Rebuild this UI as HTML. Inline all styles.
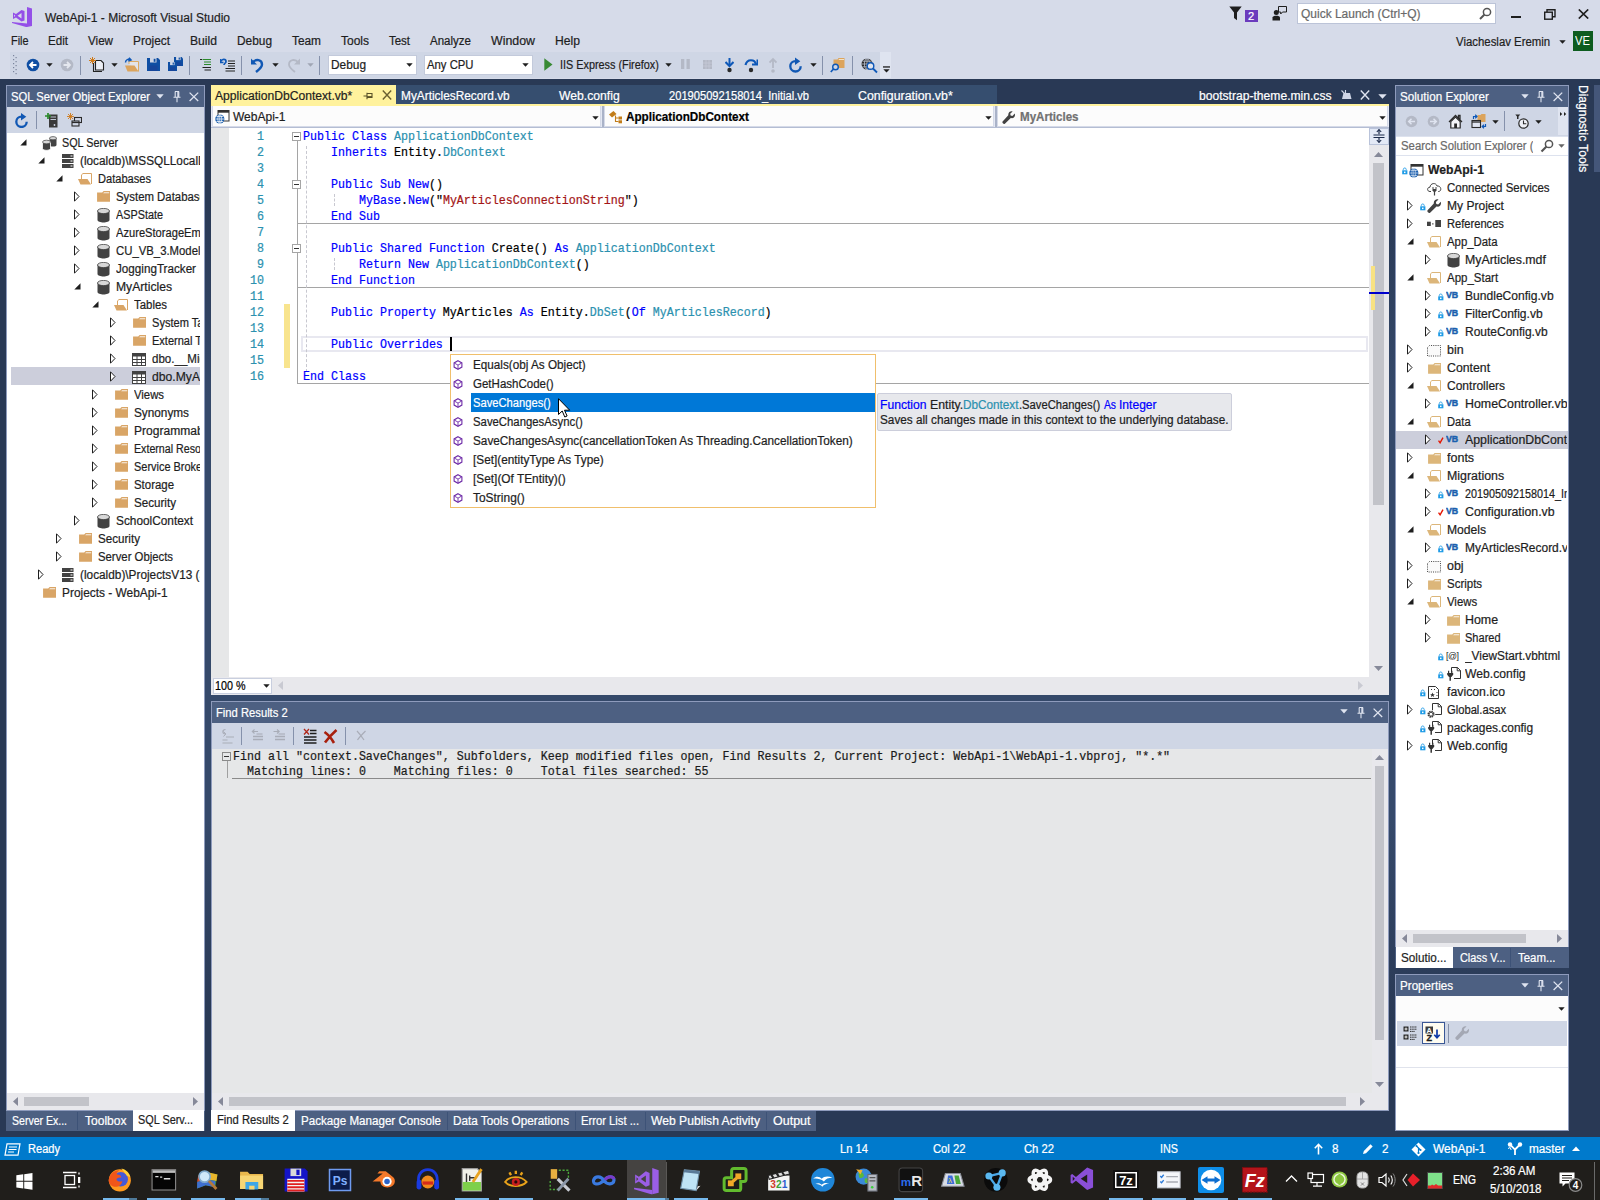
<!DOCTYPE html>
<html><head><meta charset="utf-8"><title>WebApi-1 - Microsoft Visual Studio</title>
<style>
html,body{margin:0;padding:0;}
body{width:1600px;height:1200px;overflow:hidden;position:relative;background:#293955;font-family:"Liberation Sans",sans-serif;font-size:12.5px;}
body div,body span.t,body svg{position:absolute;}
span.t{white-space:pre;transform-origin:0 50%;display:block;-webkit-text-stroke:0.22px currentColor;}
.m{font-family:"Liberation Mono",monospace;}
</style></head><body>
<div style="left:0px;top:0px;width:1600px;height:79px;background:#d6dbe9;"></div>
<div style="left:6px;top:79px;width:1563px;height:1058px;background:linear-gradient(to bottom,#293955 0,#293955 124px,#35496a 319px,#35496a 742px,#293955 940px,#293955 100%);"></div>
<div style="left:10px;top:52px;width:870px;height:26px;background:#cfd6e5;"></div>
<div style="left:880px;top:52px;width:11px;height:26px;background:#dfe4f0;"></div>
<span class="t" style="left:44.5px;top:10.37px;height:16px;line-height:16px;font-size:12.5px;color:#1e1e1e;transform:scaleX(0.9602);">WebApi-1 - Microsoft Visual Studio</span>
<span class="t" style="left:10.5px;top:33.37px;height:16px;line-height:16px;font-size:12.5px;color:#1e1e1e;transform:scaleX(0.8689);">File</span>
<span class="t" style="left:48px;top:33.37px;height:16px;line-height:16px;font-size:12.5px;color:#1e1e1e;transform:scaleX(0.9285);">Edit</span>
<span class="t" style="left:88px;top:33.37px;height:16px;line-height:16px;font-size:12.5px;color:#1e1e1e;transform:scaleX(0.9305);">View</span>
<span class="t" style="left:133px;top:33.37px;height:16px;line-height:16px;font-size:12.5px;color:#1e1e1e;transform:scaleX(0.9511);">Project</span>
<span class="t" style="left:190px;top:33.37px;height:16px;line-height:16px;font-size:12.5px;color:#1e1e1e;transform:scaleX(0.9714);">Build</span>
<span class="t" style="left:237px;top:33.37px;height:16px;line-height:16px;font-size:12.5px;color:#1e1e1e;transform:scaleX(0.9503);">Debug</span>
<span class="t" style="left:292px;top:33.37px;height:16px;line-height:16px;font-size:12.5px;color:#1e1e1e;transform:scaleX(0.9488);">Team</span>
<span class="t" style="left:341px;top:33.37px;height:16px;line-height:16px;font-size:12.5px;color:#1e1e1e;transform:scaleX(0.9596);">Tools</span>
<span class="t" style="left:389px;top:33.37px;height:16px;line-height:16px;font-size:12.5px;color:#1e1e1e;transform:scaleX(0.9161);">Test</span>
<span class="t" style="left:430px;top:33.37px;height:16px;line-height:16px;font-size:12.5px;color:#1e1e1e;transform:scaleX(0.9220);">Analyze</span>
<span class="t" style="left:491px;top:33.37px;height:16px;line-height:16px;font-size:12.5px;color:#1e1e1e;transform:scaleX(0.9897);">Window</span>
<span class="t" style="left:555px;top:33.37px;height:16px;line-height:16px;font-size:12.5px;color:#1e1e1e;transform:scaleX(0.9725);">Help</span>
<div style="left:1296.5px;top:2.5px;width:199.0px;height:21.0px;background:#fff;box-sizing:border-box;border:1px solid #bcc4d8;"></div>
<span class="t" style="left:1301px;top:5.57px;height:16px;line-height:16px;font-size:12.5px;color:#6a6a6a;transform:scaleX(0.9584);">Quick Launch (Ctrl+Q)</span>
<span class="t" style="left:1456.3px;top:33.67px;height:16px;line-height:16px;font-size:12.5px;color:#1e1e1e;transform:scaleX(0.9120);">Viacheslav Eremin</span>
<div style="left:1573px;top:31px;width:20px;height:20px;background:#0d5c1f;"></div>
<span class="t" style="left:1575.3px;top:33.10px;height:16px;line-height:16px;font-size:13px;color:#fff;transform:scaleX(0.8649);-webkit-text-stroke:0;">VE</span>
<div style="left:327.5px;top:55px;width:89.0px;height:20px;background:#fff;box-sizing:border-box;border:1px solid #c3cadb;"></div>
<span class="t" style="left:331px;top:57.37px;height:16px;line-height:16px;font-size:12.5px;color:#1e1e1e;transform:scaleX(0.9503);">Debug</span>
<div style="left:423.5px;top:55px;width:109.0px;height:20px;background:#fff;box-sizing:border-box;border:1px solid #c3cadb;"></div>
<span class="t" style="left:427px;top:57.37px;height:16px;line-height:16px;font-size:12.5px;color:#1e1e1e;transform:scaleX(0.9046);">Any CPU</span>
<span class="t" style="left:560px;top:57.37px;height:16px;line-height:16px;font-size:12.5px;color:#1e1e1e;transform:scaleX(0.8674);">IIS Express (Firefox)</span>
<div style="left:80.0px;top:55.5px;width:1.0px;height:19.0px;background:#8591ab;"></div>
<div style="left:189.0px;top:55.5px;width:1.0px;height:19.0px;background:#8591ab;"></div>
<div style="left:241.0px;top:55.5px;width:1.0px;height:19.0px;background:#8591ab;"></div>
<div style="left:319.0px;top:55.5px;width:1.0px;height:19.0px;background:#8591ab;"></div>
<div style="left:822.0px;top:55.5px;width:1.0px;height:19.0px;background:#8591ab;"></div>
<div style="left:852.0px;top:55.5px;width:1.0px;height:19.0px;background:#8591ab;"></div>
<div style="left:6px;top:85px;width:199px;height:1026px;background:#8e9bbc;"></div>
<div style="left:7px;top:86px;width:197px;height:1024px;background:#fff;"></div>
<div style="left:7px;top:86px;width:197px;height:21px;background:#4d6082;"></div>
<span class="t" style="left:11px;top:89.27px;height:16px;line-height:16px;font-size:12.5px;color:#fff;transform:scaleX(0.9000);">SQL Server Object Explorer</span>
<div style="left:7px;top:107px;width:197px;height:26px;background:#cfd6e5;"></div>
<div style="left:62px;top:134.97px;width:138px;height:16px;overflow:hidden;"><span class="t" style="left:0;top:0;height:16px;line-height:16px;font-size:12.5px;color:#1e1e1e;transform:scaleX(0.8637);">SQL Server</span></div>
<div style="left:80px;top:152.97px;width:120px;height:16px;overflow:hidden;"><span class="t" style="left:0;top:0;height:16px;line-height:16px;font-size:12.5px;color:#1e1e1e;transform:scaleX(0.9436);">(localdb)\MSSQLLocalDB (SQL</span></div>
<div style="left:98px;top:170.97px;width:102px;height:16px;overflow:hidden;"><span class="t" style="left:0;top:0;height:16px;line-height:16px;font-size:12.5px;color:#1e1e1e;transform:scaleX(0.8869);">Databases</span></div>
<div style="left:116px;top:188.97px;width:84px;height:16px;overflow:hidden;"><span class="t" style="left:0;top:0;height:16px;line-height:16px;font-size:12.5px;color:#1e1e1e;transform:scaleX(0.9106);">System Databases</span></div>
<div style="left:116px;top:206.97px;width:84px;height:16px;overflow:hidden;"><span class="t" style="left:0;top:0;height:16px;line-height:16px;font-size:12.5px;color:#1e1e1e;transform:scaleX(0.8672);">ASPState</span></div>
<div style="left:116px;top:224.97px;width:84px;height:16px;overflow:hidden;"><span class="t" style="left:0;top:0;height:16px;line-height:16px;font-size:12.5px;color:#1e1e1e;transform:scaleX(0.8907);">AzureStorageEmulatorDb</span></div>
<div style="left:116px;top:242.97px;width:84px;height:16px;overflow:hidden;"><span class="t" style="left:0;top:0;height:16px;line-height:16px;font-size:12.5px;color:#1e1e1e;transform:scaleX(0.9076);">CU_VB_3.Models</span></div>
<div style="left:116px;top:260.97px;width:84px;height:16px;overflow:hidden;"><span class="t" style="left:0;top:0;height:16px;line-height:16px;font-size:12.5px;color:#1e1e1e;transform:scaleX(0.9337);">JoggingTracker</span></div>
<div style="left:116px;top:278.97px;width:84px;height:16px;overflow:hidden;"><span class="t" style="left:0;top:0;height:16px;line-height:16px;font-size:12.5px;color:#1e1e1e;transform:scaleX(0.9715);">MyArticles</span></div>
<div style="left:134px;top:296.97px;width:66px;height:16px;overflow:hidden;"><span class="t" style="left:0;top:0;height:16px;line-height:16px;font-size:12.5px;color:#1e1e1e;transform:scaleX(0.9133);">Tables</span></div>
<div style="left:152px;top:314.97px;width:48px;height:16px;overflow:hidden;"><span class="t" style="left:0;top:0;height:16px;line-height:16px;font-size:12.5px;color:#1e1e1e;transform:scaleX(0.8848);">System Tables</span></div>
<div style="left:152px;top:332.97px;width:48px;height:16px;overflow:hidden;"><span class="t" style="left:0;top:0;height:16px;line-height:16px;font-size:12.5px;color:#1e1e1e;transform:scaleX(0.8819);">External Tables</span></div>
<div style="left:152px;top:350.97px;width:48px;height:16px;overflow:hidden;"><span class="t" style="left:0;top:0;height:16px;line-height:16px;font-size:12.5px;color:#1e1e1e;transform:scaleX(0.9238);">dbo.__MigrationHistory</span></div>
<div style="left:11px;top:367.0px;width:189px;height:18.0px;background:#cccedb;"></div>
<div style="left:152px;top:368.97px;width:48px;height:16px;overflow:hidden;"><span class="t" style="left:0;top:0;height:16px;line-height:16px;font-size:12.5px;color:#1e1e1e;transform:scaleX(0.9731);">dbo.MyArticlesRecords</span></div>
<div style="left:134px;top:386.97px;width:66px;height:16px;overflow:hidden;"><span class="t" style="left:0;top:0;height:16px;line-height:16px;font-size:12.5px;color:#1e1e1e;transform:scaleX(0.9059);">Views</span></div>
<div style="left:134px;top:404.97px;width:66px;height:16px;overflow:hidden;"><span class="t" style="left:0;top:0;height:16px;line-height:16px;font-size:12.5px;color:#1e1e1e;transform:scaleX(0.9425);">Synonyms</span></div>
<div style="left:134px;top:422.97px;width:66px;height:16px;overflow:hidden;"><span class="t" style="left:0;top:0;height:16px;line-height:16px;font-size:12.5px;color:#1e1e1e;transform:scaleX(0.9649);">Programmability</span></div>
<div style="left:134px;top:440.97px;width:66px;height:16px;overflow:hidden;"><span class="t" style="left:0;top:0;height:16px;line-height:16px;font-size:12.5px;color:#1e1e1e;transform:scaleX(0.8525);">External Resources</span></div>
<div style="left:134px;top:458.97px;width:66px;height:16px;overflow:hidden;"><span class="t" style="left:0;top:0;height:16px;line-height:16px;font-size:12.5px;color:#1e1e1e;transform:scaleX(0.8750);">Service Broker</span></div>
<div style="left:134px;top:476.97px;width:66px;height:16px;overflow:hidden;"><span class="t" style="left:0;top:0;height:16px;line-height:16px;font-size:12.5px;color:#1e1e1e;transform:scaleX(0.9137);">Storage</span></div>
<div style="left:134px;top:494.97px;width:66px;height:16px;overflow:hidden;"><span class="t" style="left:0;top:0;height:16px;line-height:16px;font-size:12.5px;color:#1e1e1e;transform:scaleX(0.9302);">Security</span></div>
<div style="left:116px;top:512.97px;width:84px;height:16px;overflow:hidden;"><span class="t" style="left:0;top:0;height:16px;line-height:16px;font-size:12.5px;color:#1e1e1e;transform:scaleX(0.9472);">SchoolContext</span></div>
<div style="left:98px;top:530.97px;width:102px;height:16px;overflow:hidden;"><span class="t" style="left:0;top:0;height:16px;line-height:16px;font-size:12.5px;color:#1e1e1e;transform:scaleX(0.9302);">Security</span></div>
<div style="left:98px;top:548.97px;width:102px;height:16px;overflow:hidden;"><span class="t" style="left:0;top:0;height:16px;line-height:16px;font-size:12.5px;color:#1e1e1e;transform:scaleX(0.9073);">Server Objects</span></div>
<div style="left:80px;top:566.97px;width:120px;height:16px;overflow:hidden;"><span class="t" style="left:0;top:0;height:16px;line-height:16px;font-size:12.5px;color:#1e1e1e;transform:scaleX(0.9452);">(localdb)\ProjectsV13 (SQL</span></div>
<div style="left:62px;top:584.97px;width:138px;height:16px;overflow:hidden;"><span class="t" style="left:0;top:0;height:16px;line-height:16px;font-size:12.5px;color:#1e1e1e;transform:scaleX(0.9512);">Projects - WebApi-1</span></div>
<div style="left:7px;top:1092.5px;width:197px;height:17.5px;background:#e8e8ec;"></div>
<div style="left:24px;top:1097px;width:65px;height:9px;background:#c2c3c9;"></div>
<div style="left:6px;top:1111px;width:199px;height:20px;background:#4d6082;"></div>
<div style="left:77px;top:1112px;width:1px;height:18px;background:#3d5277;"></div>
<div style="left:132.5px;top:1110px;width:71.5px;height:21px;background:#fff;"></div>
<span class="t" style="left:12px;top:1113.37px;height:16px;line-height:16px;font-size:12.5px;color:#fff;transform:scaleX(0.8424);">Server Ex...</span>
<span class="t" style="left:84.5px;top:1113.37px;height:16px;line-height:16px;font-size:12.5px;color:#fff;transform:scaleX(0.9633);">Toolbox</span>
<span class="t" style="left:138px;top:1111.67px;height:16px;line-height:16px;font-size:12.5px;color:#1e1e1e;transform:scaleX(0.8701);">SQL Serv...</span>
<div style="left:1395px;top:85px;width:174px;height:863px;background:#8e9bbc;"></div>
<div style="left:1396px;top:86px;width:172px;height:861px;background:#fff;"></div>
<div style="left:1396px;top:86px;width:172px;height:21px;background:#4d6082;"></div>
<span class="t" style="left:1400px;top:89.27px;height:16px;line-height:16px;font-size:12.5px;color:#fff;transform:scaleX(0.9329);">Solution Explorer</span>
<div style="left:1396px;top:107px;width:172px;height:28px;background:#cfd6e5;"></div>
<div style="left:1396px;top:135px;width:172px;height:21px;background:#cfd6e5;"></div>
<div style="left:1396px;top:136px;width:172px;height:19.5px;background:#fff;box-sizing:border-box;border-top:1px solid #dde2ee;border-bottom:1px solid #dde2ee;"></div>
<div style="left:1401.3px;top:138.27px;width:131.6px;height:16px;overflow:hidden;"><span class="t" style="left:0;top:0;height:16px;line-height:16px;font-size:12.5px;color:#6a6a6a;transform:scaleX(0.9082);">Search Solution Explorer (</span></div>
<div style="left:1428.3px;top:162.47px;width:139.20000000000005px;height:16px;overflow:hidden;"><span class="t" style="left:0;top:0;height:16px;line-height:16px;font-size:12.5px;color:#1e1e1e;transform:scaleX(0.9755);font-weight:bold;">WebApi-1</span></div>
<div style="left:1446.9px;top:180.47px;width:120.59999999999991px;height:16px;overflow:hidden;"><span class="t" style="left:0;top:0;height:16px;line-height:16px;font-size:12.5px;color:#1e1e1e;transform:scaleX(0.9172);">Connected Services</span></div>
<div style="left:1446.9px;top:198.47px;width:120.59999999999991px;height:16px;overflow:hidden;"><span class="t" style="left:0;top:0;height:16px;line-height:16px;font-size:12.5px;color:#1e1e1e;transform:scaleX(0.9638);">My Project</span></div>
<div style="left:1446.9px;top:216.47px;width:120.59999999999991px;height:16px;overflow:hidden;"><span class="t" style="left:0;top:0;height:16px;line-height:16px;font-size:12.5px;color:#1e1e1e;transform:scaleX(0.8902);">References</span></div>
<div style="left:1446.9px;top:234.47px;width:120.59999999999991px;height:16px;overflow:hidden;"><span class="t" style="left:0;top:0;height:16px;line-height:16px;font-size:12.5px;color:#1e1e1e;transform:scaleX(0.9102);">App_Data</span></div>
<div style="left:1464.9px;top:252.47px;width:102.59999999999991px;height:16px;overflow:hidden;"><span class="t" style="left:0;top:0;height:16px;line-height:16px;font-size:12.5px;color:#1e1e1e;transform:scaleX(0.9872);">MyArticles.mdf</span></div>
<div style="left:1446.9px;top:270.47px;width:120.59999999999991px;height:16px;overflow:hidden;"><span class="t" style="left:0;top:0;height:16px;line-height:16px;font-size:12.5px;color:#1e1e1e;transform:scaleX(0.9193);">App_Start</span></div>
<div style="left:1464.9px;top:288.47px;width:102.59999999999991px;height:16px;overflow:hidden;"><span class="t" style="left:0;top:0;height:16px;line-height:16px;font-size:12.5px;color:#1e1e1e;transform:scaleX(0.9659);">BundleConfig.vb</span></div>
<div style="left:1464.9px;top:306.47px;width:102.59999999999991px;height:16px;overflow:hidden;"><span class="t" style="left:0;top:0;height:16px;line-height:16px;font-size:12.5px;color:#1e1e1e;transform:scaleX(0.9630);">FilterConfig.vb</span></div>
<div style="left:1464.9px;top:324.47px;width:102.59999999999991px;height:16px;overflow:hidden;"><span class="t" style="left:0;top:0;height:16px;line-height:16px;font-size:12.5px;color:#1e1e1e;transform:scaleX(0.9587);">RouteConfig.vb</span></div>
<div style="left:1446.9px;top:342.47px;width:120.59999999999991px;height:16px;overflow:hidden;"><span class="t" style="left:0;top:0;height:16px;line-height:16px;font-size:12.5px;color:#1e1e1e;transform:scaleX(0.9952);">bin</span></div>
<div style="left:1446.9px;top:360.47px;width:120.59999999999991px;height:16px;overflow:hidden;"><span class="t" style="left:0;top:0;height:16px;line-height:16px;font-size:12.5px;color:#1e1e1e;transform:scaleX(0.9845);">Content</span></div>
<div style="left:1446.9px;top:378.47px;width:120.59999999999991px;height:16px;overflow:hidden;"><span class="t" style="left:0;top:0;height:16px;line-height:16px;font-size:12.5px;color:#1e1e1e;transform:scaleX(0.9614);">Controllers</span></div>
<div style="left:1464.9px;top:396.47px;width:102.59999999999991px;height:16px;overflow:hidden;"><span class="t" style="left:0;top:0;height:16px;line-height:16px;font-size:12.5px;color:#1e1e1e;transform:scaleX(0.9912);">HomeController.vb</span></div>
<div style="left:1446.9px;top:414.47px;width:120.59999999999991px;height:16px;overflow:hidden;"><span class="t" style="left:0;top:0;height:16px;line-height:16px;font-size:12.5px;color:#1e1e1e;transform:scaleX(0.8939);">Data</span></div>
<div style="left:1396px;top:431px;width:172px;height:18px;background:#cccedb;"></div>
<div style="left:1464.9px;top:432.47px;width:102.59999999999991px;height:16px;overflow:hidden;"><span class="t" style="left:0;top:0;height:16px;line-height:16px;font-size:12.5px;color:#1e1e1e;transform:scaleX(0.9862);">ApplicationDbContext.vb</span></div>
<div style="left:1446.9px;top:450.47px;width:120.59999999999991px;height:16px;overflow:hidden;"><span class="t" style="left:0;top:0;height:16px;line-height:16px;font-size:12.5px;color:#1e1e1e;transform:scaleX(1.0001);">fonts</span></div>
<div style="left:1446.9px;top:468.47px;width:120.59999999999991px;height:16px;overflow:hidden;"><span class="t" style="left:0;top:0;height:16px;line-height:16px;font-size:12.5px;color:#1e1e1e;transform:scaleX(0.9904);">Migrations</span></div>
<div style="left:1464.9px;top:486.47px;width:102.59999999999991px;height:16px;overflow:hidden;"><span class="t" style="left:0;top:0;height:16px;line-height:16px;font-size:12.5px;color:#1e1e1e;transform:scaleX(0.8641);">201905092158014_Initial.vb</span></div>
<div style="left:1464.9px;top:504.47px;width:102.59999999999991px;height:16px;overflow:hidden;"><span class="t" style="left:0;top:0;height:16px;line-height:16px;font-size:12.5px;color:#1e1e1e;transform:scaleX(0.9844);">Configuration.vb</span></div>
<div style="left:1446.9px;top:522.47px;width:120.59999999999991px;height:16px;overflow:hidden;"><span class="t" style="left:0;top:0;height:16px;line-height:16px;font-size:12.5px;color:#1e1e1e;transform:scaleX(0.9704);">Models</span></div>
<div style="left:1464.9px;top:540.47px;width:102.59999999999991px;height:16px;overflow:hidden;"><span class="t" style="left:0;top:0;height:16px;line-height:16px;font-size:12.5px;color:#1e1e1e;transform:scaleX(0.9575);">MyArticlesRecord.vb</span></div>
<div style="left:1446.9px;top:558.47px;width:120.59999999999991px;height:16px;overflow:hidden;"><span class="t" style="left:0;top:0;height:16px;line-height:16px;font-size:12.5px;color:#1e1e1e;transform:scaleX(0.9952);">obj</span></div>
<div style="left:1446.9px;top:576.47px;width:120.59999999999991px;height:16px;overflow:hidden;"><span class="t" style="left:0;top:0;height:16px;line-height:16px;font-size:12.5px;color:#1e1e1e;transform:scaleX(0.9188);">Scripts</span></div>
<div style="left:1446.9px;top:594.47px;width:120.59999999999991px;height:16px;overflow:hidden;"><span class="t" style="left:0;top:0;height:16px;line-height:16px;font-size:12.5px;color:#1e1e1e;transform:scaleX(0.9089);">Views</span></div>
<div style="left:1464.9px;top:612.47px;width:102.59999999999991px;height:16px;overflow:hidden;"><span class="t" style="left:0;top:0;height:16px;line-height:16px;font-size:12.5px;color:#1e1e1e;transform:scaleX(0.9927);">Home</span></div>
<div style="left:1464.9px;top:630.47px;width:102.59999999999991px;height:16px;overflow:hidden;"><span class="t" style="left:0;top:0;height:16px;line-height:16px;font-size:12.5px;color:#1e1e1e;transform:scaleX(0.8833);">Shared</span></div>
<div style="left:1464.9px;top:648.47px;width:102.59999999999991px;height:16px;overflow:hidden;"><span class="t" style="left:0;top:0;height:16px;line-height:16px;font-size:12.5px;color:#1e1e1e;transform:scaleX(0.9463);">_ViewStart.vbhtml</span></div>
<div style="left:1464.9px;top:666.47px;width:102.59999999999991px;height:16px;overflow:hidden;"><span class="t" style="left:0;top:0;height:16px;line-height:16px;font-size:12.5px;color:#1e1e1e;transform:scaleX(0.9727);">Web.config</span></div>
<div style="left:1446.9px;top:684.47px;width:120.59999999999991px;height:16px;overflow:hidden;"><span class="t" style="left:0;top:0;height:16px;line-height:16px;font-size:12.5px;color:#1e1e1e;transform:scaleX(0.9838);">favicon.ico</span></div>
<div style="left:1446.9px;top:702.47px;width:120.59999999999991px;height:16px;overflow:hidden;"><span class="t" style="left:0;top:0;height:16px;line-height:16px;font-size:12.5px;color:#1e1e1e;transform:scaleX(0.8954);">Global.asax</span></div>
<div style="left:1446.9px;top:720.47px;width:120.59999999999991px;height:16px;overflow:hidden;"><span class="t" style="left:0;top:0;height:16px;line-height:16px;font-size:12.5px;color:#1e1e1e;transform:scaleX(0.9532);">packages.config</span></div>
<div style="left:1446.9px;top:738.47px;width:120.59999999999991px;height:16px;overflow:hidden;"><span class="t" style="left:0;top:0;height:16px;line-height:16px;font-size:12.5px;color:#1e1e1e;transform:scaleX(0.9727);">Web.config</span></div>
<div style="left:1396px;top:930px;width:172px;height:17px;background:#e8e8ec;"></div>
<div style="left:1412.5px;top:934px;width:113.5px;height:9px;background:#c2c3c9;"></div>
<div style="left:1395px;top:947px;width:174px;height:21px;background:#4d6082;"></div>
<div style="left:1396px;top:947px;width:56.5px;height:21px;background:#fff;"></div>
<div style="left:1510px;top:948px;width:1px;height:19px;background:#3d5277;"></div>
<span class="t" style="left:1401px;top:949.57px;height:16px;line-height:16px;font-size:12.5px;color:#1e1e1e;transform:scaleX(0.9355);">Solutio...</span>
<span class="t" style="left:1459.5px;top:950.07px;height:16px;line-height:16px;font-size:12.5px;color:#fff;transform:scaleX(0.8694);">Class V...</span>
<span class="t" style="left:1517.5px;top:950.07px;height:16px;line-height:16px;font-size:12.5px;color:#fff;transform:scaleX(0.9150);">Team...</span>
<div style="left:1395px;top:974px;width:174px;height:157px;background:#8e9bbc;"></div>
<div style="left:1396px;top:975px;width:172px;height:155px;background:#fff;"></div>
<div style="left:1396px;top:975px;width:172px;height:21px;background:#4d6082;"></div>
<span class="t" style="left:1400px;top:978.27px;height:16px;line-height:16px;font-size:12.5px;color:#fff;transform:scaleX(0.9304);">Properties</span>
<div style="left:1396px;top:996px;width:172px;height:25px;background:#fcfcfc;"></div>
<div style="left:1397px;top:1021px;width:170px;height:25px;background:#cfd6e5;"></div>
<div style="left:1396px;top:1066.5px;width:172px;height:1.0px;background:#e0e3ec;"></div>
<div style="left:1422px;top:1022px;width:23px;height:22px;background:#fffcf0;box-sizing:border-box;border:1px solid #3a5795;"></div>
<div style="left:1448px;top:1024px;width:1px;height:19px;background:#8591ab;"></div>
<div style="left:1594px;top:85px;width:6px;height:87px;background:#445679;"></div>
<span class="t" style="left:1575.5px;top:84px;height:16px;line-height:16px;font-size:12.5px;color:#fff;transform-origin:0 0;transform:translate(15px,1px) rotate(90deg) scaleX(0.962);">Diagnostic Tools</span>
<div style="left:211px;top:85px;width:185px;height:19px;background:#fff29d;"></div>
<div style="left:396px;top:85px;width:601px;height:19px;background:#364e6f;"></div>
<div style="left:211px;top:104px;width:1177.6px;height:2px;background:#fff29d;"></div>
<span class="t" style="left:215.4px;top:87.87px;height:16px;line-height:16px;font-size:12.5px;color:#1e1e1e;transform:scaleX(0.9687);">ApplicationDbContext.vb*</span>
<span class="t" style="left:401.3px;top:87.87px;height:16px;line-height:16px;font-size:12.5px;color:#fff;transform:scaleX(0.9485);">MyArticlesRecord.vb</span>
<span class="t" style="left:559.3px;top:87.87px;height:16px;line-height:16px;font-size:12.5px;color:#fff;transform:scaleX(0.9743);">Web.config</span>
<span class="t" style="left:668.8px;top:87.87px;height:16px;line-height:16px;font-size:12.5px;color:#fff;transform:scaleX(0.8913);">201905092158014_Initial.vb</span>
<span class="t" style="left:858.3px;top:87.87px;height:16px;line-height:16px;font-size:12.5px;color:#fff;transform:scaleX(0.9876);">Configuration.vb*</span>
<span class="t" style="left:1198.5px;top:87.87px;height:16px;line-height:16px;font-size:12.5px;color:#fff;transform:scaleX(0.9682);">bootstrap-theme.min.css</span>
<div style="left:211px;top:106px;width:1177.6px;height:22px;background:#e4e8f3;"></div>
<div style="left:211px;top:126.5px;width:1177.6px;height:1.5px;background:#b4bdd3;"></div>
<div style="left:212px;top:106px;width:389px;height:20.5px;background:#fcfcfc;box-sizing:border-box;border:1px solid #d5dae8;border-top:0;"></div>
<div style="left:604px;top:106px;width:390px;height:20.5px;background:#fcfcfc;box-sizing:border-box;border:1px solid #d5dae8;border-top:0;"></div>
<div style="left:997px;top:106px;width:391px;height:20.5px;background:#fcfcfc;box-sizing:border-box;border:1px solid #d5dae8;border-top:0;"></div>
<div style="left:601.5px;top:106px;width:2.5px;height:21px;background:#a9b2c8;"></div>
<div style="left:994.5px;top:106px;width:2.5px;height:21px;background:#a9b2c8;"></div>
<span class="t" style="left:233px;top:109.37px;height:16px;line-height:16px;font-size:12.5px;color:#1e1e1e;transform:scaleX(0.9606);">WebApi-1</span>
<span class="t" style="left:626px;top:109.37px;height:16px;line-height:16px;font-size:12.5px;color:#000;transform:scaleX(0.9373);font-weight:bold;">ApplicationDbContext</span>
<span class="t" style="left:1019.5px;top:109.37px;height:16px;line-height:16px;font-size:12.5px;color:#717171;transform:scaleX(0.9254);font-weight:bold;">MyArticles</span>
<div style="left:211px;top:128px;width:1177.6px;height:566.5px;background:#fff;"></div>
<div style="left:211px;top:128px;width:18px;height:549px;background:#e6e7e8;"></div>
<div style="left:211px;top:677px;width:1158.2px;height:17.5px;background:#e8e8ec;"></div>
<div style="left:1369.2px;top:677px;width:19.4px;height:17.5px;background:#e8e8ec;"></div>
<div style="left:212.5px;top:678px;width:59.0px;height:15.5px;background:#fff;box-sizing:border-box;border:1px solid #c9cfdf;"></div>
<span class="t" style="left:214.8px;top:678.27px;height:16px;line-height:16px;font-size:12.5px;color:#000;transform:scaleX(0.8606);">100 %</span>
<div style="left:1369.2px;top:128px;width:19.4px;height:549px;background:#e8e8ec;"></div>
<div style="left:1369.2px;top:128px;width:19.4px;height:17px;background:#e3e9f6;box-sizing:border-box;border:1px solid #b9c3da;"></div>
<div style="left:1373px;top:162.5px;width:11.3px;height:342.0px;background:#c2c3c9;"></div>
<div style="left:1370.5px;top:266px;width:4.5px;height:43.5px;background:#f8e282;"></div>
<div style="left:1369px;top:292px;width:19.5px;height:2px;background:#0000cd;"></div>
<div style="left:284px;top:304px;width:5.6px;height:64px;background:#f8e48e;"></div>
<div style="left:297.5px;top:223px;width:1071.7px;height:1px;background:#a5a5a5;"></div>
<div style="left:297.5px;top:287px;width:1071.7px;height:1px;background:#a5a5a5;"></div>
<div style="left:297.5px;top:382.6px;width:1071.7px;height:1.0px;background:#a5a5a5;"></div>
<div style="left:297px;top:141px;width:1px;height:242.6px;background:#a5a5a5;"></div>
<div style="left:300.5px;top:336px;width:1067.5px;height:16px;background:#fff;box-sizing:border-box;border:2px solid #e8e8f0;"></div>
<div style="left:306px;top:146px;width:0;height:226px;border-left:1px dashed #c8c8d0;"></div>
<div style="left:334px;top:194px;width:0;height:12px;border-left:1px dashed #c8c8d0;"></div>
<div style="left:334px;top:258px;width:0;height:12px;border-left:1px dashed #c8c8d0;"></div>
<div style="left:292px;top:132px;width:9px;height:9px;background:#fff;box-sizing:border-box;border:1px solid #a5a5a5;"></div>
<div style="left:294px;top:136px;width:5px;height:1px;background:#333;"></div>
<div style="left:292px;top:180px;width:9px;height:9px;background:#fff;box-sizing:border-box;border:1px solid #a5a5a5;"></div>
<div style="left:294px;top:184px;width:5px;height:1px;background:#333;"></div>
<div style="left:292px;top:244px;width:9px;height:9px;background:#fff;box-sizing:border-box;border:1px solid #a5a5a5;"></div>
<div style="left:294px;top:248px;width:5px;height:1px;background:#333;"></div>
<span class="t m" style="left:257px;top:129.48px;height:16px;line-height:16px;font-size:13.2px;transform:scaleX(0.8837);"><span style="color:#2b91af">1</span></span>
<span class="t m" style="left:303.3px;top:129.48px;height:16px;line-height:16px;font-size:13.2px;transform:scaleX(0.8837);"><span style="color:#0000ff">Public Class </span><span style="color:#2b91af">ApplicationDbContext</span></span>
<span class="t m" style="left:257px;top:145.48px;height:16px;line-height:16px;font-size:13.2px;transform:scaleX(0.8837);"><span style="color:#2b91af">2</span></span>
<span class="t m" style="left:303.3px;top:145.48px;height:16px;line-height:16px;font-size:13.2px;transform:scaleX(0.8837);"><span style="color:#0000ff">    Inherits </span><span style="color:#000">Entity.</span><span style="color:#2b91af">DbContext</span></span>
<span class="t m" style="left:257px;top:161.48px;height:16px;line-height:16px;font-size:13.2px;transform:scaleX(0.8837);"><span style="color:#2b91af">3</span></span>
<span class="t m" style="left:257px;top:177.48px;height:16px;line-height:16px;font-size:13.2px;transform:scaleX(0.8837);"><span style="color:#2b91af">4</span></span>
<span class="t m" style="left:303.3px;top:177.48px;height:16px;line-height:16px;font-size:13.2px;transform:scaleX(0.8837);"><span style="color:#0000ff">    Public Sub New</span><span style="color:#000">()</span></span>
<span class="t m" style="left:257px;top:193.48px;height:16px;line-height:16px;font-size:13.2px;transform:scaleX(0.8837);"><span style="color:#2b91af">5</span></span>
<span class="t m" style="left:303.3px;top:193.48px;height:16px;line-height:16px;font-size:13.2px;transform:scaleX(0.8837);"><span style="color:#0000ff">        MyBase</span><span style="color:#000">.</span><span style="color:#0000ff">New</span><span style="color:#000">("</span><span style="color:#a31515">MyArticlesConnectionString</span><span style="color:#000">")</span></span>
<span class="t m" style="left:257px;top:209.48px;height:16px;line-height:16px;font-size:13.2px;transform:scaleX(0.8837);"><span style="color:#2b91af">6</span></span>
<span class="t m" style="left:303.3px;top:209.48px;height:16px;line-height:16px;font-size:13.2px;transform:scaleX(0.8837);"><span style="color:#0000ff">    End Sub</span></span>
<span class="t m" style="left:257px;top:225.48px;height:16px;line-height:16px;font-size:13.2px;transform:scaleX(0.8837);"><span style="color:#2b91af">7</span></span>
<span class="t m" style="left:257px;top:241.48px;height:16px;line-height:16px;font-size:13.2px;transform:scaleX(0.8837);"><span style="color:#2b91af">8</span></span>
<span class="t m" style="left:303.3px;top:241.48px;height:16px;line-height:16px;font-size:13.2px;transform:scaleX(0.8837);"><span style="color:#0000ff">    Public Shared Function </span><span style="color:#000">Create() </span><span style="color:#0000ff">As </span><span style="color:#2b91af">ApplicationDbContext</span></span>
<span class="t m" style="left:257px;top:257.48px;height:16px;line-height:16px;font-size:13.2px;transform:scaleX(0.8837);"><span style="color:#2b91af">9</span></span>
<span class="t m" style="left:303.3px;top:257.48px;height:16px;line-height:16px;font-size:13.2px;transform:scaleX(0.8837);"><span style="color:#0000ff">        Return New </span><span style="color:#2b91af">ApplicationDbContext</span><span style="color:#000">()</span></span>
<span class="t m" style="left:250px;top:273.48px;height:16px;line-height:16px;font-size:13.2px;transform:scaleX(0.8837);"><span style="color:#2b91af">10</span></span>
<span class="t m" style="left:303.3px;top:273.48px;height:16px;line-height:16px;font-size:13.2px;transform:scaleX(0.8837);"><span style="color:#0000ff">    End Function</span></span>
<span class="t m" style="left:250px;top:289.48px;height:16px;line-height:16px;font-size:13.2px;transform:scaleX(0.8837);"><span style="color:#2b91af">11</span></span>
<span class="t m" style="left:250px;top:305.48px;height:16px;line-height:16px;font-size:13.2px;transform:scaleX(0.8837);"><span style="color:#2b91af">12</span></span>
<span class="t m" style="left:303.3px;top:305.48px;height:16px;line-height:16px;font-size:13.2px;transform:scaleX(0.8837);"><span style="color:#0000ff">    Public Property </span><span style="color:#000">MyArticles </span><span style="color:#0000ff">As </span><span style="color:#000">Entity.</span><span style="color:#2b91af">DbSet</span><span style="color:#000">(</span><span style="color:#0000ff">Of </span><span style="color:#2b91af">MyArticlesRecord</span><span style="color:#000">)</span></span>
<span class="t m" style="left:250px;top:321.48px;height:16px;line-height:16px;font-size:13.2px;transform:scaleX(0.8837);"><span style="color:#2b91af">13</span></span>
<span class="t m" style="left:250px;top:337.48px;height:16px;line-height:16px;font-size:13.2px;transform:scaleX(0.8837);"><span style="color:#2b91af">14</span></span>
<span class="t m" style="left:303.3px;top:337.48px;height:16px;line-height:16px;font-size:13.2px;transform:scaleX(0.8837);"><span style="color:#0000ff">    Public Overrides </span></span>
<span class="t m" style="left:250px;top:353.48px;height:16px;line-height:16px;font-size:13.2px;transform:scaleX(0.8837);"><span style="color:#2b91af">15</span></span>
<span class="t m" style="left:250px;top:369.48px;height:16px;line-height:16px;font-size:13.2px;transform:scaleX(0.8837);"><span style="color:#2b91af">16</span></span>
<span class="t m" style="left:303.3px;top:369.48px;height:16px;line-height:16px;font-size:13.2px;transform:scaleX(0.8837);"><span style="color:#0000ff">End Class</span></span>
<div style="left:450.4px;top:336.5px;width:1.2px;height:14.5px;background:#000;"></div>
<div style="left:450px;top:354px;width:426px;height:154px;background:#fff;box-sizing:border-box;border:1px solid #f0bf6c;"></div>
<span class="t" style="left:473.3px;top:357.07px;height:16px;line-height:16px;font-size:12.5px;color:#1e1e1e;transform:scaleX(0.9377);">Equals(obj As Object)</span>
<span class="t" style="left:473.3px;top:376.07px;height:16px;line-height:16px;font-size:12.5px;color:#1e1e1e;transform:scaleX(0.9220);">GetHashCode()</span>
<div style="left:471px;top:393px;width:404px;height:19px;background:#0078d7;"></div>
<span class="t" style="left:473.3px;top:395.07px;height:16px;line-height:16px;font-size:12.5px;color:#fff;transform:scaleX(0.8947);">SaveChanges()</span>
<span class="t" style="left:473.3px;top:414.07px;height:16px;line-height:16px;font-size:12.5px;color:#1e1e1e;transform:scaleX(0.9075);">SaveChangesAsync()</span>
<span class="t" style="left:473.3px;top:433.07px;height:16px;line-height:16px;font-size:12.5px;color:#1e1e1e;transform:scaleX(0.9427);">SaveChangesAsync(cancellationToken As Threading.CancellationToken)</span>
<span class="t" style="left:473.3px;top:452.07px;height:16px;line-height:16px;font-size:12.5px;color:#1e1e1e;transform:scaleX(0.9422);">[Set](entityType As Type)</span>
<span class="t" style="left:473.3px;top:471.07px;height:16px;line-height:16px;font-size:12.5px;color:#1e1e1e;transform:scaleX(0.9489);">[Set](Of TEntity)()</span>
<span class="t" style="left:473.3px;top:490.07px;height:16px;line-height:16px;font-size:12.5px;color:#1e1e1e;transform:scaleX(0.9543);">ToString()</span>
<div style="left:876.5px;top:393px;width:355.0px;height:38px;background:#e7e8ec;box-sizing:border-box;border:1px solid #cccedb;border-radius:2px;"></div>
<span class="t" style="left:880px;top:397.37px;height:16px;line-height:16px;font-size:12.5px;color:#0000ff;transform:scaleX(0.9700);">Function</span>
<span class="t" style="left:930px;top:397.37px;height:16px;line-height:16px;font-size:12.5px;color:#1e1e1e;transform:scaleX(0.9821);">Entity.</span>
<span class="t" style="left:962.8px;top:397.37px;height:16px;line-height:16px;font-size:12.5px;color:#2b91af;transform:scaleX(0.9398);">DbContext</span>
<span class="t" style="left:1018.6px;top:397.37px;height:16px;line-height:16px;font-size:12.5px;color:#1e1e1e;transform:scaleX(0.8990);">.SaveChanges()</span>
<span class="t" style="left:1103.5px;top:397.37px;height:16px;line-height:16px;font-size:12.5px;color:#0000ff;transform:scaleX(0.8226);">As</span>
<span class="t" style="left:1119px;top:397.37px;height:16px;line-height:16px;font-size:12.5px;color:#0000ff;transform:scaleX(0.9663);">Integer</span>
<span class="t" style="left:880px;top:412.37px;height:16px;line-height:16px;font-size:12.5px;color:#1e1e1e;transform:scaleX(0.9410);">Saves all changes made in this context to the underlying database.</span>
<div style="left:211px;top:701px;width:1178px;height:410px;background:#8e9bbc;"></div>
<div style="left:212px;top:702px;width:1176px;height:408px;background:#e6e7e8;"></div>
<div style="left:212px;top:702px;width:1176px;height:20.5px;background:#4d6082;"></div>
<span class="t" style="left:216.3px;top:705.27px;height:16px;line-height:16px;font-size:12.5px;color:#fff;transform:scaleX(0.8975);">Find Results 2</span>
<div style="left:212px;top:722.5px;width:1176px;height:26.5px;background:#cfd6e5;"></div>
<div style="left:241.0px;top:727px;width:1.0px;height:18px;background:#8591ab;"></div>
<div style="left:293.0px;top:727px;width:1.0px;height:18px;background:#8591ab;"></div>
<div style="left:345.0px;top:727px;width:1.0px;height:18px;background:#8591ab;"></div>
<span class="t m" style="left:233.3px;top:749.48px;height:15px;line-height:15px;font-size:13.2px;color:#1a1a1a;transform:scaleX(0.8837);">Find all "context.SaveChanges", Subfolders, Keep modified files open, Find Results 2, Current Project: WebApi-1\WebApi-1.vbproj, "*.*"</span>
<span class="t m" style="left:233.3px;top:763.98px;height:15px;line-height:15px;font-size:13.2px;color:#1a1a1a;transform:scaleX(0.8837);">  Matching lines: 0    Matching files: 0    Total files searched: 55</span>
<div style="left:222px;top:752px;width:9px;height:9px;background:#e6e7e8;box-sizing:border-box;border:1px solid #8a8a8a;"></div>
<div style="left:224px;top:756px;width:5px;height:1px;background:#333;"></div>
<div style="left:227px;top:761px;width:1px;height:17px;background:#a0a0a0;"></div>
<div style="left:232px;top:777.5px;width:1139px;height:1.0px;background:#8a8a8a;"></div>
<div style="left:1371.5px;top:749px;width:16.5px;height:343.5px;background:#e8e8ec;"></div>
<div style="left:1375px;top:766px;width:9px;height:274px;background:#c2c3c9;"></div>
<div style="left:212px;top:1092.5px;width:1176px;height:17.5px;background:#e8e8ec;"></div>
<div style="left:228.5px;top:1097px;width:1117.5px;height:9px;background:#c2c3c9;"></div>
<div style="left:211px;top:1111px;width:605px;height:20px;background:#4d6082;"></div>
<div style="left:211px;top:1110px;width:83.5px;height:21px;background:#fff;"></div>
<span class="t" style="left:217px;top:1111.67px;height:16px;line-height:16px;font-size:12.5px;color:#1e1e1e;transform:scaleX(0.8987);">Find Results 2</span>
<span class="t" style="left:301px;top:1113.37px;height:16px;line-height:16px;font-size:12.5px;color:#fff;transform:scaleX(0.9285);">Package Manager Console</span>
<span class="t" style="left:453px;top:1113.37px;height:16px;line-height:16px;font-size:12.5px;color:#fff;transform:scaleX(0.9397);">Data Tools Operations</span>
<span class="t" style="left:581px;top:1113.37px;height:16px;line-height:16px;font-size:12.5px;color:#fff;transform:scaleX(0.8980);">Error List ...</span>
<span class="t" style="left:651px;top:1113.37px;height:16px;line-height:16px;font-size:12.5px;color:#fff;transform:scaleX(0.9705);">Web Publish Activity</span>
<span class="t" style="left:772.5px;top:1113.37px;height:16px;line-height:16px;font-size:12.5px;color:#fff;transform:scaleX(0.9994);">Output</span>
<div style="left:446.5px;top:1112px;width:1.0px;height:18px;background:#3d5277;"></div>
<div style="left:574.5px;top:1112px;width:1.0px;height:18px;background:#3d5277;"></div>
<div style="left:644.5px;top:1112px;width:1.0px;height:18px;background:#3d5277;"></div>
<div style="left:765.5px;top:1112px;width:1.0px;height:18px;background:#3d5277;"></div>
<div style="left:0px;top:1137px;width:1600px;height:23px;background:#007acc;"></div>
<span class="t" style="left:28px;top:1141.07px;height:16px;line-height:16px;font-size:12.5px;color:#fff;transform:scaleX(0.8857);">Ready</span>
<span class="t" style="left:840px;top:1141.07px;height:16px;line-height:16px;font-size:12.5px;color:#fff;transform:scaleX(0.8952);">Ln 14</span>
<span class="t" style="left:932.5px;top:1141.07px;height:16px;line-height:16px;font-size:12.5px;color:#fff;transform:scaleX(0.8995);">Col 22</span>
<span class="t" style="left:1024px;top:1141.07px;height:16px;line-height:16px;font-size:12.5px;color:#fff;transform:scaleX(0.8995);">Ch 22</span>
<span class="t" style="left:1160px;top:1141.07px;height:16px;line-height:16px;font-size:12.5px;color:#fff;transform:scaleX(0.8638);">INS</span>
<span class="t" style="left:1331.5px;top:1141.07px;height:16px;line-height:16px;font-size:12.5px;color:#fff;transform:scaleX(0.9351);">8</span>
<span class="t" style="left:1381.5px;top:1141.07px;height:16px;line-height:16px;font-size:12.5px;color:#fff;transform:scaleX(0.9351);">2</span>
<span class="t" style="left:1432.5px;top:1141.07px;height:16px;line-height:16px;font-size:12.5px;color:#fff;transform:scaleX(0.9606);">WebApi-1</span>
<span class="t" style="left:1529px;top:1141.07px;height:16px;line-height:16px;font-size:12.5px;color:#fff;transform:scaleX(0.9424);">master</span>
<svg style="left:19.7px;top:139.0px;" width="7" height="7" viewBox="0 0 7 7"><path d="M6.5 0.3V6.5H0.3Z" fill="#1e1e1e"/></svg>
<svg style="left:42px;top:135.5px;" width="15" height="15" viewBox="0 0 15 15"><path d="M7.5 2v7c0 2 7 2 7 0V2z" fill="#424242"/><ellipse cx="11" cy="2.2" rx="3.5" ry="1.6" fill="#d8d8d8" stroke="#424242" stroke-width="0.7"/><path d="M0.5 6v6.5c0 2.4 8 2.4 8 0V6z" fill="#424242" stroke="#fff" stroke-width="0.8"/><ellipse cx="4.5" cy="6" rx="4" ry="1.8" fill="#d8d8d8" stroke="#424242" stroke-width="0.7"/></svg>
<svg style="left:37.7px;top:157.0px;" width="7" height="7" viewBox="0 0 7 7"><path d="M6.5 0.3V6.5H0.3Z" fill="#1e1e1e"/></svg>
<svg style="left:61.5px;top:154.0px;" width="12" height="14" viewBox="0 0 12 14"><rect x="0" y="0" width="11.5" height="4" fill="#424242"/><rect x="8.5" y="1.5" width="2" height="1" fill="#fff"/><rect x="0" y="5" width="11.5" height="4" fill="#424242"/><rect x="8.5" y="6.5" width="2" height="1" fill="#fff"/><rect x="0" y="10" width="11.5" height="4" fill="#424242"/><rect x="8.5" y="11.5" width="2" height="1" fill="#fff"/></svg>
<svg style="left:55.7px;top:175.0px;" width="7" height="7" viewBox="0 0 7 7"><path d="M6.5 0.3V6.5H0.3Z" fill="#1e1e1e"/></svg>
<svg style="left:78px;top:173.0px;" width="15" height="12" viewBox="0 0 15 12"><path d="M3.5 6V1.8L5 0.5h8.5V11" fill="#fff" stroke="#d9a566" stroke-width="1"/><path d="M0 6h9.5l3.5 5.5H2.5z" fill="#d9a566"/></svg>
<svg style="left:73.7px;top:191.0px;" width="6" height="11" viewBox="0 0 6 11"><path d="M0.5 0.8L5 5.5L0.5 10.2Z" fill="#fff" stroke="#1e1e1e" stroke-width="1"/></svg>
<svg style="left:96.9px;top:191.4px;" width="13.2" height="11.2" viewBox="0 0 14 12"><path d="M0 1.5h5.5l1.5-1.5H14V11.5H0z" fill="#d9a566"/><path d="M7.5 1.3h5.5v1.2H6.5z" fill="#fff" opacity=".85"/></svg>
<svg style="left:73.7px;top:209.0px;" width="6" height="11" viewBox="0 0 6 11"><path d="M0.5 0.8L5 5.5L0.5 10.2Z" fill="#fff" stroke="#1e1e1e" stroke-width="1"/></svg>
<svg style="left:97px;top:207.5px;" width="13" height="15" viewBox="0 0 13 15"><path d="M0.5 3v9c0 3.3 12 3.3 12 0V3z" fill="#424242"/><ellipse cx="6.5" cy="3" rx="6" ry="2.6" fill="#d8d8d8" stroke="#424242" stroke-width="0.8"/></svg>
<svg style="left:73.7px;top:227.0px;" width="6" height="11" viewBox="0 0 6 11"><path d="M0.5 0.8L5 5.5L0.5 10.2Z" fill="#fff" stroke="#1e1e1e" stroke-width="1"/></svg>
<svg style="left:97px;top:225.5px;" width="13" height="15" viewBox="0 0 13 15"><path d="M0.5 3v9c0 3.3 12 3.3 12 0V3z" fill="#424242"/><ellipse cx="6.5" cy="3" rx="6" ry="2.6" fill="#d8d8d8" stroke="#424242" stroke-width="0.8"/></svg>
<svg style="left:73.7px;top:245.0px;" width="6" height="11" viewBox="0 0 6 11"><path d="M0.5 0.8L5 5.5L0.5 10.2Z" fill="#fff" stroke="#1e1e1e" stroke-width="1"/></svg>
<svg style="left:97px;top:243.5px;" width="13" height="15" viewBox="0 0 13 15"><path d="M0.5 3v9c0 3.3 12 3.3 12 0V3z" fill="#424242"/><ellipse cx="6.5" cy="3" rx="6" ry="2.6" fill="#d8d8d8" stroke="#424242" stroke-width="0.8"/></svg>
<svg style="left:73.7px;top:263.0px;" width="6" height="11" viewBox="0 0 6 11"><path d="M0.5 0.8L5 5.5L0.5 10.2Z" fill="#fff" stroke="#1e1e1e" stroke-width="1"/></svg>
<svg style="left:97px;top:261.5px;" width="13" height="15" viewBox="0 0 13 15"><path d="M0.5 3v9c0 3.3 12 3.3 12 0V3z" fill="#424242"/><ellipse cx="6.5" cy="3" rx="6" ry="2.6" fill="#d8d8d8" stroke="#424242" stroke-width="0.8"/></svg>
<svg style="left:73.7px;top:283.0px;" width="7" height="7" viewBox="0 0 7 7"><path d="M6.5 0.3V6.5H0.3Z" fill="#1e1e1e"/></svg>
<svg style="left:97px;top:279.5px;" width="13" height="15" viewBox="0 0 13 15"><path d="M0.5 3v9c0 3.3 12 3.3 12 0V3z" fill="#424242"/><ellipse cx="6.5" cy="3" rx="6" ry="2.6" fill="#d8d8d8" stroke="#424242" stroke-width="0.8"/></svg>
<svg style="left:91.7px;top:301.0px;" width="7" height="7" viewBox="0 0 7 7"><path d="M6.5 0.3V6.5H0.3Z" fill="#1e1e1e"/></svg>
<svg style="left:114px;top:299.0px;" width="15" height="12" viewBox="0 0 15 12"><path d="M3.5 6V1.8L5 0.5h8.5V11" fill="#fff" stroke="#d9a566" stroke-width="1"/><path d="M0 6h9.5l3.5 5.5H2.5z" fill="#d9a566"/></svg>
<svg style="left:109.7px;top:317.0px;" width="6" height="11" viewBox="0 0 6 11"><path d="M0.5 0.8L5 5.5L0.5 10.2Z" fill="#fff" stroke="#1e1e1e" stroke-width="1"/></svg>
<svg style="left:132.9px;top:317.4px;" width="13.2" height="11.2" viewBox="0 0 14 12"><path d="M0 1.5h5.5l1.5-1.5H14V11.5H0z" fill="#d9a566"/><path d="M7.5 1.3h5.5v1.2H6.5z" fill="#fff" opacity=".85"/></svg>
<svg style="left:109.7px;top:335.0px;" width="6" height="11" viewBox="0 0 6 11"><path d="M0.5 0.8L5 5.5L0.5 10.2Z" fill="#fff" stroke="#1e1e1e" stroke-width="1"/></svg>
<svg style="left:132.9px;top:335.4px;" width="13.2" height="11.2" viewBox="0 0 14 12"><path d="M0 1.5h5.5l1.5-1.5H14V11.5H0z" fill="#d9a566"/><path d="M7.5 1.3h5.5v1.2H6.5z" fill="#fff" opacity=".85"/></svg>
<svg style="left:109.7px;top:353.0px;" width="6" height="11" viewBox="0 0 6 11"><path d="M0.5 0.8L5 5.5L0.5 10.2Z" fill="#fff" stroke="#1e1e1e" stroke-width="1"/></svg>
<svg style="left:132px;top:352.5px;" width="14" height="13" viewBox="0 0 14 13"><rect x="0.5" y="0.5" width="13" height="12" fill="#fff" stroke="#424242"/><rect x="0.5" y="0.5" width="13" height="3" fill="#424242"/><path d="M0.5 6.5h13M0.5 9.5h13M5 3v10M9.5 3v10" stroke="#424242" stroke-width="1"/></svg>
<svg style="left:109.7px;top:371.0px;" width="6" height="11" viewBox="0 0 6 11"><path d="M0.5 0.8L5 5.5L0.5 10.2Z" fill="#fff" stroke="#1e1e1e" stroke-width="1"/></svg>
<svg style="left:132px;top:370.5px;" width="14" height="13" viewBox="0 0 14 13"><rect x="0.5" y="0.5" width="13" height="12" fill="#fff" stroke="#424242"/><rect x="0.5" y="0.5" width="13" height="3" fill="#424242"/><path d="M0.5 6.5h13M0.5 9.5h13M5 3v10M9.5 3v10" stroke="#424242" stroke-width="1"/></svg>
<svg style="left:91.7px;top:389.0px;" width="6" height="11" viewBox="0 0 6 11"><path d="M0.5 0.8L5 5.5L0.5 10.2Z" fill="#fff" stroke="#1e1e1e" stroke-width="1"/></svg>
<svg style="left:114.9px;top:389.4px;" width="13.2" height="11.2" viewBox="0 0 14 12"><path d="M0 1.5h5.5l1.5-1.5H14V11.5H0z" fill="#d9a566"/><path d="M7.5 1.3h5.5v1.2H6.5z" fill="#fff" opacity=".85"/></svg>
<svg style="left:91.7px;top:407.0px;" width="6" height="11" viewBox="0 0 6 11"><path d="M0.5 0.8L5 5.5L0.5 10.2Z" fill="#fff" stroke="#1e1e1e" stroke-width="1"/></svg>
<svg style="left:114.9px;top:407.4px;" width="13.2" height="11.2" viewBox="0 0 14 12"><path d="M0 1.5h5.5l1.5-1.5H14V11.5H0z" fill="#d9a566"/><path d="M7.5 1.3h5.5v1.2H6.5z" fill="#fff" opacity=".85"/></svg>
<svg style="left:91.7px;top:425.0px;" width="6" height="11" viewBox="0 0 6 11"><path d="M0.5 0.8L5 5.5L0.5 10.2Z" fill="#fff" stroke="#1e1e1e" stroke-width="1"/></svg>
<svg style="left:114.9px;top:425.4px;" width="13.2" height="11.2" viewBox="0 0 14 12"><path d="M0 1.5h5.5l1.5-1.5H14V11.5H0z" fill="#d9a566"/><path d="M7.5 1.3h5.5v1.2H6.5z" fill="#fff" opacity=".85"/></svg>
<svg style="left:91.7px;top:443.0px;" width="6" height="11" viewBox="0 0 6 11"><path d="M0.5 0.8L5 5.5L0.5 10.2Z" fill="#fff" stroke="#1e1e1e" stroke-width="1"/></svg>
<svg style="left:114.9px;top:443.4px;" width="13.2" height="11.2" viewBox="0 0 14 12"><path d="M0 1.5h5.5l1.5-1.5H14V11.5H0z" fill="#d9a566"/><path d="M7.5 1.3h5.5v1.2H6.5z" fill="#fff" opacity=".85"/></svg>
<svg style="left:91.7px;top:461.0px;" width="6" height="11" viewBox="0 0 6 11"><path d="M0.5 0.8L5 5.5L0.5 10.2Z" fill="#fff" stroke="#1e1e1e" stroke-width="1"/></svg>
<svg style="left:114.9px;top:461.4px;" width="13.2" height="11.2" viewBox="0 0 14 12"><path d="M0 1.5h5.5l1.5-1.5H14V11.5H0z" fill="#d9a566"/><path d="M7.5 1.3h5.5v1.2H6.5z" fill="#fff" opacity=".85"/></svg>
<svg style="left:91.7px;top:479.0px;" width="6" height="11" viewBox="0 0 6 11"><path d="M0.5 0.8L5 5.5L0.5 10.2Z" fill="#fff" stroke="#1e1e1e" stroke-width="1"/></svg>
<svg style="left:114.9px;top:479.4px;" width="13.2" height="11.2" viewBox="0 0 14 12"><path d="M0 1.5h5.5l1.5-1.5H14V11.5H0z" fill="#d9a566"/><path d="M7.5 1.3h5.5v1.2H6.5z" fill="#fff" opacity=".85"/></svg>
<svg style="left:91.7px;top:497.0px;" width="6" height="11" viewBox="0 0 6 11"><path d="M0.5 0.8L5 5.5L0.5 10.2Z" fill="#fff" stroke="#1e1e1e" stroke-width="1"/></svg>
<svg style="left:114.9px;top:497.4px;" width="13.2" height="11.2" viewBox="0 0 14 12"><path d="M0 1.5h5.5l1.5-1.5H14V11.5H0z" fill="#d9a566"/><path d="M7.5 1.3h5.5v1.2H6.5z" fill="#fff" opacity=".85"/></svg>
<svg style="left:73.7px;top:515.0px;" width="6" height="11" viewBox="0 0 6 11"><path d="M0.5 0.8L5 5.5L0.5 10.2Z" fill="#fff" stroke="#1e1e1e" stroke-width="1"/></svg>
<svg style="left:97px;top:513.5px;" width="13" height="15" viewBox="0 0 13 15"><path d="M0.5 3v9c0 3.3 12 3.3 12 0V3z" fill="#424242"/><ellipse cx="6.5" cy="3" rx="6" ry="2.6" fill="#d8d8d8" stroke="#424242" stroke-width="0.8"/></svg>
<svg style="left:55.7px;top:533.0px;" width="6" height="11" viewBox="0 0 6 11"><path d="M0.5 0.8L5 5.5L0.5 10.2Z" fill="#fff" stroke="#1e1e1e" stroke-width="1"/></svg>
<svg style="left:78.9px;top:533.4px;" width="13.2" height="11.2" viewBox="0 0 14 12"><path d="M0 1.5h5.5l1.5-1.5H14V11.5H0z" fill="#d9a566"/><path d="M7.5 1.3h5.5v1.2H6.5z" fill="#fff" opacity=".85"/></svg>
<svg style="left:55.7px;top:551.0px;" width="6" height="11" viewBox="0 0 6 11"><path d="M0.5 0.8L5 5.5L0.5 10.2Z" fill="#fff" stroke="#1e1e1e" stroke-width="1"/></svg>
<svg style="left:78.9px;top:551.4px;" width="13.2" height="11.2" viewBox="0 0 14 12"><path d="M0 1.5h5.5l1.5-1.5H14V11.5H0z" fill="#d9a566"/><path d="M7.5 1.3h5.5v1.2H6.5z" fill="#fff" opacity=".85"/></svg>
<svg style="left:37.7px;top:569.0px;" width="6" height="11" viewBox="0 0 6 11"><path d="M0.5 0.8L5 5.5L0.5 10.2Z" fill="#fff" stroke="#1e1e1e" stroke-width="1"/></svg>
<svg style="left:61.5px;top:568.0px;" width="12" height="14" viewBox="0 0 12 14"><rect x="0" y="0" width="11.5" height="4" fill="#424242"/><rect x="8.5" y="1.5" width="2" height="1" fill="#fff"/><rect x="0" y="5" width="11.5" height="4" fill="#424242"/><rect x="8.5" y="6.5" width="2" height="1" fill="#fff"/><rect x="0" y="10" width="11.5" height="4" fill="#424242"/><rect x="8.5" y="11.5" width="2" height="1" fill="#fff"/></svg>
<svg style="left:42.9px;top:587.4px;" width="13.2" height="11.2" viewBox="0 0 14 12"><path d="M0 1.5h5.5l1.5-1.5H14V11.5H0z" fill="#d9a566"/><path d="M7.5 1.3h5.5v1.2H6.5z" fill="#fff" opacity=".85"/></svg>
<svg style="left:1409px;top:163.5px;" width="15" height="14" viewBox="0 0 15 14"><rect x="2" y="0.5" width="12" height="10.5" fill="#fff" stroke="#333"/><rect x="2" y="0.5" width="12" height="2.2" fill="#333"/><circle cx="4.8" cy="9" r="4.6" fill="#1b5fae"/><path d="M0.5 9h8.600M4.8 4.600v8.8M1.5 6.5h6.600M1.5 11.5h6.6" stroke="#fff" stroke-width="0.5"/><ellipse cx="4.8" cy="9" rx="2" ry="4.4" fill="none" stroke="#fff" stroke-width="0.5"/></svg>
<svg style="left:1402px;top:167.0px;" width="6" height="7.5" viewBox="0 0 6 7.5"><path d="M1.3 3.2V2.300C1.3 .5 4.2 .5 4.2 2.300V3.2" fill="none" stroke="#2aa0ea" stroke-width="0.9"/><rect x="0.2" y="3.3" width="5.2" height="4" fill="#1e9be6"/><rect x="2" y="4.6" width="1.5" height="1.5" fill="#fff"/></svg>
<svg style="left:1427.3px;top:181.5px;" width="15" height="14" viewBox="0 0 15 14"><path d="M4 9.5H3c-3.2 0-3.2-4.3 0-4.300C3.2 1 9 .2 10 4c4.5-.5 5 5.5 1.5 5.5H11" fill="#fff" stroke="#424242" stroke-width="1"/><path d="M6 5v2M9 5v2" stroke="#424242"/><path d="M5.5 7h4v1.5l-1.3 1.5h-1.4L5.5 8.5z" fill="#424242"/><path d="M7.5 10v3.5" stroke="#424242" stroke-width="1.2"/></svg>
<svg style="left:1407px;top:199.9px;" width="6" height="11" viewBox="0 0 6 11"><path d="M0.5 0.8L5 5.5L0.5 10.2Z" fill="#fff" stroke="#1e1e1e" stroke-width="1"/></svg>
<svg style="left:1427.3px;top:199px;" width="15" height="15" viewBox="0 0 15 15"><path d="M13.8 2.8l-2.6 2.6-1.9-.4-.4-1.9L11.5.5C9.5-.3 6.5 1 6.8 4.5L.6 11.300c-1 1.3 1.2 3.5 2.5 2.5L9.5 7.5c3 .8 5.3-1.5 4.3-4.7z" fill="#424242"/></svg>
<svg style="left:1420px;top:203.0px;" width="6" height="7.5" viewBox="0 0 6 7.5"><path d="M1.3 3.2V2.300C1.3 .5 4.2 .5 4.2 2.300V3.2" fill="none" stroke="#2aa0ea" stroke-width="0.9"/><rect x="0.2" y="3.3" width="5.2" height="4" fill="#1e9be6"/><rect x="2" y="4.6" width="1.5" height="1.5" fill="#fff"/></svg>
<svg style="left:1407px;top:217.9px;" width="6" height="11" viewBox="0 0 6 11"><path d="M0.5 0.8L5 5.5L0.5 10.2Z" fill="#fff" stroke="#1e1e1e" stroke-width="1"/></svg>
<svg style="left:1427.3px;top:220px;" width="15" height="8" viewBox="0 0 15 8"><rect x="0" y="1.7" width="3.8" height="4.3" fill="#424242"/><rect x="5" y="3.4" width="1.6" height="1" fill="#424242"/><rect x="8.3" y="0" width="5.7" height="7" fill="#424242"/></svg>
<svg style="left:1407px;top:237.9px;" width="7" height="7" viewBox="0 0 7 7"><path d="M6.5 0.3V6.5H0.3Z" fill="#1e1e1e"/></svg>
<svg style="left:1427.3px;top:236.2px;" width="15" height="12" viewBox="0 0 15 12"><path d="M3.5 6V1.8L5 0.5h8.5V11" fill="#fff" stroke="#dcb67a" stroke-width="1"/><path d="M0 6h9.5l3.5 5.5H2.5z" fill="#dcb67a"/></svg>
<svg style="left:1425px;top:253.89999999999998px;" width="6" height="11" viewBox="0 0 6 11"><path d="M0.5 0.8L5 5.5L0.5 10.2Z" fill="#fff" stroke="#1e1e1e" stroke-width="1"/></svg>
<svg style="left:1446.7px;top:252.5px;" width="13" height="15" viewBox="0 0 13 15"><path d="M0.5 3v9c0 3.3 12 3.3 12 0V3z" fill="#424242"/><ellipse cx="6.5" cy="3" rx="6" ry="2.6" fill="#d8d8d8" stroke="#424242" stroke-width="0.8"/></svg>
<svg style="left:1407px;top:273.9px;" width="7" height="7" viewBox="0 0 7 7"><path d="M6.5 0.3V6.5H0.3Z" fill="#1e1e1e"/></svg>
<svg style="left:1427.3px;top:272.2px;" width="15" height="12" viewBox="0 0 15 12"><path d="M3.5 6V1.8L5 0.5h8.5V11" fill="#fff" stroke="#dcb67a" stroke-width="1"/><path d="M0 6h9.5l3.5 5.5H2.5z" fill="#dcb67a"/></svg>
<svg style="left:1425px;top:289.9px;" width="6" height="11" viewBox="0 0 6 11"><path d="M0.5 0.8L5 5.5L0.5 10.2Z" fill="#fff" stroke="#1e1e1e" stroke-width="1"/></svg>
<svg style="left:1445.7px;top:291.0px;" width="14" height="9" viewBox="0 0 14 9"><text x="0" y="7.3" font-family="Liberation Sans" font-weight="bold" font-size="9.6" fill="#1b5fae" stroke="#1b5fae" stroke-width="0.5" textLength="12.2" lengthAdjust="spacingAndGlyphs">VB</text></svg>
<svg style="left:1438px;top:293.0px;" width="6" height="7.5" viewBox="0 0 6 7.5"><path d="M1.3 3.2V2.300C1.3 .5 4.2 .5 4.2 2.300V3.2" fill="none" stroke="#2aa0ea" stroke-width="0.9"/><rect x="0.2" y="3.3" width="5.2" height="4" fill="#1e9be6"/><rect x="2" y="4.6" width="1.5" height="1.5" fill="#fff"/></svg>
<svg style="left:1425px;top:307.9px;" width="6" height="11" viewBox="0 0 6 11"><path d="M0.5 0.8L5 5.5L0.5 10.2Z" fill="#fff" stroke="#1e1e1e" stroke-width="1"/></svg>
<svg style="left:1445.7px;top:309.0px;" width="14" height="9" viewBox="0 0 14 9"><text x="0" y="7.3" font-family="Liberation Sans" font-weight="bold" font-size="9.6" fill="#1b5fae" stroke="#1b5fae" stroke-width="0.5" textLength="12.2" lengthAdjust="spacingAndGlyphs">VB</text></svg>
<svg style="left:1438px;top:311.0px;" width="6" height="7.5" viewBox="0 0 6 7.5"><path d="M1.3 3.2V2.300C1.3 .5 4.2 .5 4.2 2.300V3.2" fill="none" stroke="#2aa0ea" stroke-width="0.9"/><rect x="0.2" y="3.3" width="5.2" height="4" fill="#1e9be6"/><rect x="2" y="4.6" width="1.5" height="1.5" fill="#fff"/></svg>
<svg style="left:1425px;top:325.9px;" width="6" height="11" viewBox="0 0 6 11"><path d="M0.5 0.8L5 5.5L0.5 10.2Z" fill="#fff" stroke="#1e1e1e" stroke-width="1"/></svg>
<svg style="left:1445.7px;top:327.0px;" width="14" height="9" viewBox="0 0 14 9"><text x="0" y="7.3" font-family="Liberation Sans" font-weight="bold" font-size="9.6" fill="#1b5fae" stroke="#1b5fae" stroke-width="0.5" textLength="12.2" lengthAdjust="spacingAndGlyphs">VB</text></svg>
<svg style="left:1438px;top:329.0px;" width="6" height="7.5" viewBox="0 0 6 7.5"><path d="M1.3 3.2V2.300C1.3 .5 4.2 .5 4.2 2.300V3.2" fill="none" stroke="#2aa0ea" stroke-width="0.9"/><rect x="0.2" y="3.3" width="5.2" height="4" fill="#1e9be6"/><rect x="2" y="4.6" width="1.5" height="1.5" fill="#fff"/></svg>
<svg style="left:1407px;top:343.9px;" width="6" height="11" viewBox="0 0 6 11"><path d="M0.5 0.8L5 5.5L0.5 10.2Z" fill="#fff" stroke="#1e1e1e" stroke-width="1"/></svg>
<svg style="left:1427.3px;top:344.5px;" width="14" height="12" viewBox="0 0 14 12"><path d="M0.5 2.5l2-2h11v10.5H0.5z" fill="#fafafa" stroke="#444" stroke-width="1" stroke-dasharray="1 1.2"/></svg>
<svg style="left:1407px;top:361.9px;" width="6" height="11" viewBox="0 0 6 11"><path d="M0.5 0.8L5 5.5L0.5 10.2Z" fill="#fff" stroke="#1e1e1e" stroke-width="1"/></svg>
<svg style="left:1428.2px;top:362.59999999999997px;" width="13.2" height="11.2" viewBox="0 0 14 12"><path d="M0 1.5h5.5l1.5-1.5H14V11.5H0z" fill="#dcb67a"/><path d="M7.5 1.3h5.5v1.2H6.5z" fill="#fff" opacity=".85"/></svg>
<svg style="left:1407px;top:381.9px;" width="7" height="7" viewBox="0 0 7 7"><path d="M6.5 0.3V6.5H0.3Z" fill="#1e1e1e"/></svg>
<svg style="left:1427.3px;top:380.2px;" width="15" height="12" viewBox="0 0 15 12"><path d="M3.5 6V1.8L5 0.5h8.5V11" fill="#fff" stroke="#dcb67a" stroke-width="1"/><path d="M0 6h9.5l3.5 5.5H2.5z" fill="#dcb67a"/></svg>
<svg style="left:1425px;top:397.9px;" width="6" height="11" viewBox="0 0 6 11"><path d="M0.5 0.8L5 5.5L0.5 10.2Z" fill="#fff" stroke="#1e1e1e" stroke-width="1"/></svg>
<svg style="left:1445.7px;top:399.0px;" width="14" height="9" viewBox="0 0 14 9"><text x="0" y="7.3" font-family="Liberation Sans" font-weight="bold" font-size="9.6" fill="#1b5fae" stroke="#1b5fae" stroke-width="0.5" textLength="12.2" lengthAdjust="spacingAndGlyphs">VB</text></svg>
<svg style="left:1438px;top:401.0px;" width="6" height="7.5" viewBox="0 0 6 7.5"><path d="M1.3 3.2V2.300C1.3 .5 4.2 .5 4.2 2.300V3.2" fill="none" stroke="#2aa0ea" stroke-width="0.9"/><rect x="0.2" y="3.3" width="5.2" height="4" fill="#1e9be6"/><rect x="2" y="4.6" width="1.5" height="1.5" fill="#fff"/></svg>
<svg style="left:1407px;top:417.9px;" width="7" height="7" viewBox="0 0 7 7"><path d="M6.5 0.3V6.5H0.3Z" fill="#1e1e1e"/></svg>
<svg style="left:1427.3px;top:416.2px;" width="15" height="12" viewBox="0 0 15 12"><path d="M3.5 6V1.8L5 0.5h8.5V11" fill="#fff" stroke="#dcb67a" stroke-width="1"/><path d="M0 6h9.5l3.5 5.5H2.5z" fill="#dcb67a"/></svg>
<svg style="left:1425px;top:433.9px;" width="6" height="11" viewBox="0 0 6 11"><path d="M0.5 0.8L5 5.5L0.5 10.2Z" fill="#fff" stroke="#1e1e1e" stroke-width="1"/></svg>
<svg style="left:1445.7px;top:435.0px;" width="14" height="9" viewBox="0 0 14 9"><text x="0" y="7.3" font-family="Liberation Sans" font-weight="bold" font-size="9.6" fill="#1b5fae" stroke="#1b5fae" stroke-width="0.5" textLength="12.2" lengthAdjust="spacingAndGlyphs">VB</text></svg>
<svg style="left:1438.3px;top:437.2px;" width="6" height="7" viewBox="0 0 6 7"><path d="M0.5 3.6l1.6 2.2L5 0.6" fill="none" stroke="#e51400" stroke-width="1.4"/></svg>
<svg style="left:1407px;top:451.9px;" width="6" height="11" viewBox="0 0 6 11"><path d="M0.5 0.8L5 5.5L0.5 10.2Z" fill="#fff" stroke="#1e1e1e" stroke-width="1"/></svg>
<svg style="left:1428.2px;top:452.59999999999997px;" width="13.2" height="11.2" viewBox="0 0 14 12"><path d="M0 1.5h5.5l1.5-1.5H14V11.5H0z" fill="#dcb67a"/><path d="M7.5 1.3h5.5v1.2H6.5z" fill="#fff" opacity=".85"/></svg>
<svg style="left:1407px;top:471.9px;" width="7" height="7" viewBox="0 0 7 7"><path d="M6.5 0.3V6.5H0.3Z" fill="#1e1e1e"/></svg>
<svg style="left:1427.3px;top:470.2px;" width="15" height="12" viewBox="0 0 15 12"><path d="M3.5 6V1.8L5 0.5h8.5V11" fill="#fff" stroke="#dcb67a" stroke-width="1"/><path d="M0 6h9.5l3.5 5.5H2.5z" fill="#dcb67a"/></svg>
<svg style="left:1425px;top:487.9px;" width="6" height="11" viewBox="0 0 6 11"><path d="M0.5 0.8L5 5.5L0.5 10.2Z" fill="#fff" stroke="#1e1e1e" stroke-width="1"/></svg>
<svg style="left:1445.7px;top:489.0px;" width="14" height="9" viewBox="0 0 14 9"><text x="0" y="7.3" font-family="Liberation Sans" font-weight="bold" font-size="9.6" fill="#1b5fae" stroke="#1b5fae" stroke-width="0.5" textLength="12.2" lengthAdjust="spacingAndGlyphs">VB</text></svg>
<svg style="left:1438px;top:491.0px;" width="6" height="7.5" viewBox="0 0 6 7.5"><path d="M1.3 3.2V2.300C1.3 .5 4.2 .5 4.2 2.300V3.2" fill="none" stroke="#2aa0ea" stroke-width="0.9"/><rect x="0.2" y="3.3" width="5.2" height="4" fill="#1e9be6"/><rect x="2" y="4.6" width="1.5" height="1.5" fill="#fff"/></svg>
<svg style="left:1425px;top:505.9px;" width="6" height="11" viewBox="0 0 6 11"><path d="M0.5 0.8L5 5.5L0.5 10.2Z" fill="#fff" stroke="#1e1e1e" stroke-width="1"/></svg>
<svg style="left:1445.7px;top:507.0px;" width="14" height="9" viewBox="0 0 14 9"><text x="0" y="7.3" font-family="Liberation Sans" font-weight="bold" font-size="9.6" fill="#1b5fae" stroke="#1b5fae" stroke-width="0.5" textLength="12.2" lengthAdjust="spacingAndGlyphs">VB</text></svg>
<svg style="left:1438.3px;top:509.2px;" width="6" height="7" viewBox="0 0 6 7"><path d="M0.5 3.6l1.6 2.2L5 0.6" fill="none" stroke="#e51400" stroke-width="1.4"/></svg>
<svg style="left:1407px;top:525.9px;" width="7" height="7" viewBox="0 0 7 7"><path d="M6.5 0.3V6.5H0.3Z" fill="#1e1e1e"/></svg>
<svg style="left:1427.3px;top:524.2px;" width="15" height="12" viewBox="0 0 15 12"><path d="M3.5 6V1.8L5 0.5h8.5V11" fill="#fff" stroke="#dcb67a" stroke-width="1"/><path d="M0 6h9.5l3.5 5.5H2.5z" fill="#dcb67a"/></svg>
<svg style="left:1425px;top:541.9px;" width="6" height="11" viewBox="0 0 6 11"><path d="M0.5 0.8L5 5.5L0.5 10.2Z" fill="#fff" stroke="#1e1e1e" stroke-width="1"/></svg>
<svg style="left:1445.7px;top:543.0px;" width="14" height="9" viewBox="0 0 14 9"><text x="0" y="7.3" font-family="Liberation Sans" font-weight="bold" font-size="9.6" fill="#1b5fae" stroke="#1b5fae" stroke-width="0.5" textLength="12.2" lengthAdjust="spacingAndGlyphs">VB</text></svg>
<svg style="left:1438px;top:545.0px;" width="6" height="7.5" viewBox="0 0 6 7.5"><path d="M1.3 3.2V2.300C1.3 .5 4.2 .5 4.2 2.300V3.2" fill="none" stroke="#2aa0ea" stroke-width="0.9"/><rect x="0.2" y="3.3" width="5.2" height="4" fill="#1e9be6"/><rect x="2" y="4.6" width="1.5" height="1.5" fill="#fff"/></svg>
<svg style="left:1407px;top:559.9px;" width="6" height="11" viewBox="0 0 6 11"><path d="M0.5 0.8L5 5.5L0.5 10.2Z" fill="#fff" stroke="#1e1e1e" stroke-width="1"/></svg>
<svg style="left:1427.3px;top:560.5px;" width="14" height="12" viewBox="0 0 14 12"><path d="M0.5 2.5l2-2h11v10.5H0.5z" fill="#fafafa" stroke="#444" stroke-width="1" stroke-dasharray="1 1.2"/></svg>
<svg style="left:1407px;top:577.9px;" width="6" height="11" viewBox="0 0 6 11"><path d="M0.5 0.8L5 5.5L0.5 10.2Z" fill="#fff" stroke="#1e1e1e" stroke-width="1"/></svg>
<svg style="left:1428.2px;top:578.6px;" width="13.2" height="11.2" viewBox="0 0 14 12"><path d="M0 1.5h5.5l1.5-1.5H14V11.5H0z" fill="#dcb67a"/><path d="M7.5 1.3h5.5v1.2H6.5z" fill="#fff" opacity=".85"/></svg>
<svg style="left:1407px;top:597.9px;" width="7" height="7" viewBox="0 0 7 7"><path d="M6.5 0.3V6.5H0.3Z" fill="#1e1e1e"/></svg>
<svg style="left:1427.3px;top:596.2px;" width="15" height="12" viewBox="0 0 15 12"><path d="M3.5 6V1.8L5 0.5h8.5V11" fill="#fff" stroke="#dcb67a" stroke-width="1"/><path d="M0 6h9.5l3.5 5.5H2.5z" fill="#dcb67a"/></svg>
<svg style="left:1425px;top:613.9px;" width="6" height="11" viewBox="0 0 6 11"><path d="M0.5 0.8L5 5.5L0.5 10.2Z" fill="#fff" stroke="#1e1e1e" stroke-width="1"/></svg>
<svg style="left:1446.6000000000001px;top:614.6px;" width="13.2" height="11.2" viewBox="0 0 14 12"><path d="M0 1.5h5.5l1.5-1.5H14V11.5H0z" fill="#dcb67a"/><path d="M7.5 1.3h5.5v1.2H6.5z" fill="#fff" opacity=".85"/></svg>
<svg style="left:1425px;top:631.9px;" width="6" height="11" viewBox="0 0 6 11"><path d="M0.5 0.8L5 5.5L0.5 10.2Z" fill="#fff" stroke="#1e1e1e" stroke-width="1"/></svg>
<svg style="left:1446.6000000000001px;top:632.6px;" width="13.2" height="11.2" viewBox="0 0 14 12"><path d="M0 1.5h5.5l1.5-1.5H14V11.5H0z" fill="#dcb67a"/><path d="M7.5 1.3h5.5v1.2H6.5z" fill="#fff" opacity=".85"/></svg>
<span class="t" style="left:1445.9px;top:647.8px;height:16px;line-height:16px;font-size:9.3px;color:#222;letter-spacing:-0.5px;transform:scaleX(0.95);-webkit-text-stroke:0;">[@]</span>
<svg style="left:1437.5px;top:653.0px;" width="6" height="7.5" viewBox="0 0 6 7.5"><path d="M1.3 3.2V2.300C1.3 .5 4.2 .5 4.2 2.300V3.2" fill="none" stroke="#2aa0ea" stroke-width="0.9"/><rect x="0.2" y="3.3" width="5.2" height="4" fill="#1e9be6"/><rect x="2" y="4.6" width="1.5" height="1.5" fill="#fff"/></svg>
<svg style="left:1445.7px;top:666.7px;" width="15" height="16" viewBox="0 0 15 16"><path d="M5.5 0.5h6l3 3V11.5H5.5z" fill="#fff" stroke="#333" stroke-width="1"/><path d="M11.2 0.5v3.300h3.3" fill="none" stroke="#333" stroke-width="1"/><rect x="2.5" y="5.5" width="5.5" height="7" fill="#fff"/><path d="M2.6 3.8v2.4M5.8 3.8v2.4" stroke="#333" stroke-width="1.2"/><path d="M1.2 6h6v1.8l-1.8 2.2h-2.4L1.2 7.8z" fill="#333"/><path d="M4.2 9.5v4.300" stroke="#333" stroke-width="1.5"/></svg>
<svg style="left:1438px;top:671.0px;" width="6" height="7.5" viewBox="0 0 6 7.5"><path d="M1.3 3.2V2.300C1.3 .5 4.2 .5 4.2 2.300V3.2" fill="none" stroke="#2aa0ea" stroke-width="0.9"/><rect x="0.2" y="3.3" width="5.2" height="4" fill="#1e9be6"/><rect x="2" y="4.6" width="1.5" height="1.5" fill="#fff"/></svg>
<svg style="left:1428.3px;top:685.8px;" width="12" height="14" viewBox="0 0 12 14"><path d="M0.5 0.5h7l3 3V12.5H0.5z" fill="#fff" stroke="#333" stroke-width="1"/><path d="M3 3.5h1M6 3.5h1M8.5 6.5h1M8.5 9.5h1M3 6h0" stroke="#333"/><path d="M4.5 6.5l.7 1.7h1.7l-1.3 1.1.5 1.7-1.6-1-1.6 1 .5-1.7-1.3-1.100h1.7z" fill="#333"/></svg>
<svg style="left:1420px;top:689.0px;" width="6" height="7.5" viewBox="0 0 6 7.5"><path d="M1.3 3.2V2.300C1.3 .5 4.2 .5 4.2 2.300V3.2" fill="none" stroke="#2aa0ea" stroke-width="0.9"/><rect x="0.2" y="3.3" width="5.2" height="4" fill="#1e9be6"/><rect x="2" y="4.6" width="1.5" height="1.5" fill="#fff"/></svg>
<svg style="left:1407px;top:703.9px;" width="6" height="11" viewBox="0 0 6 11"><path d="M0.5 0.8L5 5.5L0.5 10.2Z" fill="#fff" stroke="#1e1e1e" stroke-width="1"/></svg>
<svg style="left:1427.3px;top:702.7px;" width="15" height="16" viewBox="0 0 15 16"><path d="M5.5 0.5h6l3 3V11.5H5.5z" fill="#fff" stroke="#333" stroke-width="1"/><path d="M11.2 0.5v3.300h3.3" fill="none" stroke="#333" stroke-width="1"/><circle cx="4" cy="11.2" r="4.2" fill="#fff"/><circle cx="4" cy="11.2" r="2.7" fill="none" stroke="#3a3a3a" stroke-width="1.7" stroke-dasharray="1.4 0.720"/><circle cx="4" cy="11.2" r="1.9" fill="#fff" stroke="#3a3a3a" stroke-width="0.9"/></svg>
<svg style="left:1420px;top:707.0px;" width="6" height="7.5" viewBox="0 0 6 7.5"><path d="M1.3 3.2V2.300C1.3 .5 4.2 .5 4.2 2.300V3.2" fill="none" stroke="#2aa0ea" stroke-width="0.9"/><rect x="0.2" y="3.3" width="5.2" height="4" fill="#1e9be6"/><rect x="2" y="4.6" width="1.5" height="1.5" fill="#fff"/></svg>
<svg style="left:1427.3px;top:720.7px;" width="15" height="16" viewBox="0 0 15 16"><path d="M5.5 0.5h6l3 3V11.5H5.5z" fill="#fff" stroke="#333" stroke-width="1"/><path d="M11.2 0.5v3.300h3.3" fill="none" stroke="#333" stroke-width="1"/><rect x="2.5" y="5.5" width="5.5" height="7" fill="#fff"/><path d="M2.6 3.8v2.4M5.8 3.8v2.4" stroke="#333" stroke-width="1.2"/><path d="M1.2 6h6v1.8l-1.8 2.2h-2.4L1.2 7.8z" fill="#333"/><path d="M4.2 9.5v4.300" stroke="#333" stroke-width="1.5"/></svg>
<svg style="left:1420px;top:725.0px;" width="6" height="7.5" viewBox="0 0 6 7.5"><path d="M1.3 3.2V2.300C1.3 .5 4.2 .5 4.2 2.300V3.2" fill="none" stroke="#2aa0ea" stroke-width="0.9"/><rect x="0.2" y="3.3" width="5.2" height="4" fill="#1e9be6"/><rect x="2" y="4.6" width="1.5" height="1.5" fill="#fff"/></svg>
<svg style="left:1407px;top:739.9px;" width="6" height="11" viewBox="0 0 6 11"><path d="M0.5 0.8L5 5.5L0.5 10.2Z" fill="#fff" stroke="#1e1e1e" stroke-width="1"/></svg>
<svg style="left:1427.3px;top:738.7px;" width="15" height="16" viewBox="0 0 15 16"><path d="M5.5 0.5h6l3 3V11.5H5.5z" fill="#fff" stroke="#333" stroke-width="1"/><path d="M11.2 0.5v3.300h3.3" fill="none" stroke="#333" stroke-width="1"/><rect x="2.5" y="5.5" width="5.5" height="7" fill="#fff"/><path d="M2.6 3.8v2.4M5.8 3.8v2.4" stroke="#333" stroke-width="1.2"/><path d="M1.2 6h6v1.8l-1.8 2.2h-2.4L1.2 7.8z" fill="#333"/><path d="M4.2 9.5v4.300" stroke="#333" stroke-width="1.5"/></svg>
<svg style="left:1420px;top:743.0px;" width="6" height="7.5" viewBox="0 0 6 7.5"><path d="M1.3 3.2V2.300C1.3 .5 4.2 .5 4.2 2.300V3.2" fill="none" stroke="#2aa0ea" stroke-width="0.9"/><rect x="0.2" y="3.3" width="5.2" height="4" fill="#1e9be6"/><rect x="2" y="4.6" width="1.5" height="1.5" fill="#fff"/></svg>
<svg style="left:12.5px;top:55.3px;" width="5" height="20" viewBox="0 0 5 20"><rect x="0" y="0" width="1.2" height="1.2" fill="#7a849c"/><rect x="2.5" y="2" width="1.2" height="1.2" fill="#7a849c"/><rect x="0" y="4" width="1.2" height="1.2" fill="#7a849c"/><rect x="2.5" y="6" width="1.2" height="1.2" fill="#7a849c"/><rect x="0" y="8" width="1.2" height="1.2" fill="#7a849c"/><rect x="2.5" y="10" width="1.2" height="1.2" fill="#7a849c"/><rect x="0" y="12" width="1.2" height="1.2" fill="#7a849c"/><rect x="2.5" y="14" width="1.2" height="1.2" fill="#7a849c"/><rect x="0" y="16" width="1.2" height="1.2" fill="#7a849c"/><rect x="2.5" y="18" width="1.2" height="1.2" fill="#7a849c"/></svg>
<svg style="left:25.5px;top:57.8px;" width="14" height="14" viewBox="0 0 14 14"><circle cx="7" cy="7" r="6.3" fill="#0e4ea3"/><path d="M10.5 7H4.500M7 4L4 7l3 3" fill="none" stroke="#fff" stroke-width="1.8"/></svg>
<svg style="left:45.5px;top:62.8px;" width="7" height="4" viewBox="0 0 7 4"><path d="M0.3 0.300H6.700L3.5 3.700Z" fill="#1e1e1e"/></svg>
<svg style="left:59.5px;top:57.8px;" width="14" height="14" viewBox="0 0 14 14"><circle cx="7" cy="7" r="6.3" fill="#b4b9c6"/><path d="M3.5 7h6M7 4l3 3-3 3" fill="none" stroke="#e4e7ee" stroke-width="1.8"/></svg>
<svg style="left:88.5px;top:56.8px;" width="16" height="16" viewBox="0 0 16 16"><path d="M4.5 6v8.500h8.5" fill="none" stroke="#222" stroke-width="1.1"/><path d="M6.5 3.500h5.500l2.5 2.500v7H6.500z" fill="#eceef4" stroke="#222" stroke-width="1.1"/><path d="M3.5 0v7M0 3.500h7M1 1l5 5M6 1L1 6" stroke="#d07a18" stroke-width="1"/></svg>
<svg style="left:110.5px;top:62.8px;" width="7" height="4" viewBox="0 0 7 4"><path d="M0.3 0.300H6.700L3.5 3.700Z" fill="#1e1e1e"/></svg>
<svg style="left:123.5px;top:56.8px;" width="16" height="16" viewBox="0 0 16 16"><path d="M5 7V4.500h9.500v10" fill="#e4e4e8" stroke="#dcaa62" stroke-width="1"/><path d="M1 8.500h9.500l4 6H3.500z" fill="#dca45c"/><path d="M1.5 5.500c0-3 3-4 5-2.500M5 0.800l2 2.2-2.8 1" fill="none" stroke="#0e58b8" stroke-width="1.5"/></svg>
<svg style="left:146.5px;top:57.8px;" width="13" height="13" viewBox="0 0 13 13"><path d="M0 0h11l2 2v11H0z" fill="#0e4ea3"/><rect x="3" y="0" width="6.5" height="4.5" fill="#cfd6e5"/><rect x="6.7" y="0.8" width="1.8" height="3" fill="#0e4ea3"/><rect x="2.5" y="7.5" width="8" height="5.5" fill="#16459a"/></svg>
<svg style="left:174px;top:56.8px;" width="9" height="9" viewBox="0 0 13 13"><path d="M0 0h11l2 2v11H0z" fill="#0e4ea3"/><rect x="3" y="0" width="6.5" height="4.5" fill="#cfd6e5"/><rect x="6.7" y="0.8" width="1.8" height="3" fill="#0e4ea3"/><rect x="2.5" y="7.5" width="8" height="5.5" fill="#16459a"/></svg>
<svg style="left:168px;top:62.3px;" width="9" height="9" viewBox="0 0 13 13"><path d="M0 0h11l2 2v11H0z" fill="#0e4ea3"/><rect x="3" y="0" width="6.5" height="4.5" fill="#cfd6e5"/><rect x="6.7" y="0.8" width="1.8" height="3" fill="#0e4ea3"/><rect x="2.5" y="7.5" width="8" height="5.5" fill="#16459a"/></svg>
<svg style="left:198.5px;top:57.8px;" width="13" height="14" viewBox="0 0 13 14"><path d="M1 1.500h2" stroke="#222" stroke-width="1.2"/><path d="M3.5 1.500h8.500M5 4h7M5 6.500h7" stroke="#2a8a2a" stroke-width="1.2"/><path d="M3.5 9.500h8.500M5.5 12h6.5" stroke="#222" stroke-width="1.2"/></svg>
<svg style="left:219.5px;top:57.8px;" width="16" height="15" viewBox="0 0 16 15"><path d="M1 3.500c1-3 5-2.5 5 0 0 1.5-2 2-2 3.5" fill="none" stroke="#0e58b8" stroke-width="1.7"/><path d="M0.5 1v3.500h3" fill="none" stroke="#0e58b8" stroke-width="1.3"/><path d="M8 3h7M8 5.500h7M8 8h7M5.5 10.500h9.500M5.5 13h9.5" stroke="#222" stroke-width="1.2"/></svg>
<svg style="left:250px;top:56.8px;" width="15" height="16" viewBox="0 0 15 16"><path d="M2.5 5.500C6 1.5 12 2.5 12 7.500c0 3-3.5 5.5-6 7.5" fill="none" stroke="#1158b4" stroke-width="2.4"/><path d="M1 1.500v6h6z" fill="#1158b4"/></svg>
<svg style="left:271.5px;top:62.8px;" width="7" height="4" viewBox="0 0 7 4"><path d="M0.3 0.300H6.700L3.5 3.700Z" fill="#1e1e1e"/></svg>
<svg style="left:285.5px;top:56.8px;" width="15" height="16" viewBox="0 0 15 16"><path d="M12.5 5.500C9 1.5 3 2.5 3 7.500c0 3 3.5 5.5 6 7.5" fill="none" stroke="#b4b9c6" stroke-width="1.8"/><path d="M14 1.500v6H8z" fill="#b4b9c6"/></svg>
<svg style="left:306.5px;top:62.8px;" width="7" height="4" viewBox="0 0 7 4"><path d="M0.3 0.300H6.700L3.5 3.700Z" fill="#a0a6b4"/></svg>
<svg style="left:406.0px;top:62.8px;" width="7" height="4" viewBox="0 0 7 4"><path d="M0.3 0.300H6.700L3.5 3.700Z" fill="#1e1e1e"/></svg>
<svg style="left:522.0px;top:62.8px;" width="7" height="4" viewBox="0 0 7 4"><path d="M0.3 0.300H6.700L3.5 3.700Z" fill="#1e1e1e"/></svg>
<svg style="left:543.5px;top:57.8px;" width="9" height="13" viewBox="0 0 9 13"><path d="M0.3 0.300L8.5 6.500L0.3 12.700Z" fill="#388a34"/></svg>
<svg style="left:665.0px;top:62.8px;" width="7" height="4" viewBox="0 0 7 4"><path d="M0.3 0.300H6.700L3.5 3.700Z" fill="#1e1e1e"/></svg>
<svg style="left:680.5px;top:59.3px;" width="9" height="10" viewBox="0 0 9 10"><rect x="0" y="0" width="3.3" height="10" fill="#b4b9c6"/><rect x="5.5" y="0" width="3.3" height="10" fill="#b4b9c6"/></svg>
<svg style="left:702.5px;top:59.8px;" width="9" height="9" viewBox="0 0 9 9"><rect width="9" height="9" fill="#b4b9c6"/><path d="M3 0v9M6 0v9M0 3h9M0 6h9" stroke="#c8ccd8" stroke-width="0.7"/></svg>
<svg style="left:724.5px;top:57.3px;" width="9" height="16" viewBox="0 0 9 16"><path d="M4.5 1v7" stroke="#0e58b8" stroke-width="2"/><path d="M0.5 5l4 4 4-4" fill="none" stroke="#0e58b8" stroke-width="2"/><circle cx="4.5" cy="13" r="2.2" fill="#2a2a2a"/></svg>
<svg style="left:744px;top:57.3px;" width="14" height="16" viewBox="0 0 14 16"><path d="M1.5 8C3 1.5 11 2 12 7.5" fill="none" stroke="#0e58b8" stroke-width="2.2"/><path d="M8 7.500h5.500V2.5" fill="none" stroke="#0e58b8" stroke-width="2"/><circle cx="7" cy="13" r="2.2" fill="#2a2a2a"/></svg>
<svg style="left:769px;top:57.3px;" width="8" height="16" viewBox="0 0 8 16"><path d="M4 3v8" stroke="#b4b9c6" stroke-width="1.8"/><path d="M0.5 5.500L4 2l3.5 3.5" fill="none" stroke="#b4b9c6" stroke-width="1.8"/><circle cx="4" cy="14" r="1.8" fill="#b4b9c6"/></svg>
<svg style="left:789px;top:56.8px;" width="14" height="16" viewBox="0 0 14 16"><path d="M11.700 9.300A5.200 5.200 0 1 1 6.500 4.100" fill="none" stroke="#1158b4" stroke-width="2.300"/><path d="M6 0.500L11.300 4.200 6 7.900z" fill="#1158b4"/></svg>
<svg style="left:809.5px;top:62.8px;" width="7" height="4" viewBox="0 0 7 4"><path d="M0.3 0.300H6.700L3.5 3.700Z" fill="#1e1e1e"/></svg>
<svg style="left:830px;top:56.8px;" width="16" height="16" viewBox="0 0 16 16"><path d="M3.5 2.500h4l1-1.500h6V11H3.500z" fill="#dca45c"/><path d="M9 2h5v1H8.500z" fill="#f4e2c4"/><circle cx="5.5" cy="10" r="2.8" fill="#cfd6e5" stroke="#0e58b8" stroke-width="1.4"/><path d="M3.5 12L0.8 15" stroke="#0e58b8" stroke-width="1.7"/></svg>
<svg style="left:860.5px;top:57.8px;" width="17" height="16" viewBox="0 0 17 16"><circle cx="6" cy="6" r="5.5" fill="#2a2a2a"/><path d="M0.5 6h11M6 0.500v11M1.5 3.200h9M1.5 8.800h9" stroke="#cfd6e5" stroke-width="0.7"/><ellipse cx="6" cy="6" rx="2.6" ry="5.4" fill="none" stroke="#cfd6e5" stroke-width="0.7"/><circle cx="9.5" cy="8" r="3.3" fill="#dfe4ee" stroke="#0e58b8" stroke-width="1.4"/><path d="M12 10.500l4 4" stroke="#0e58b8" stroke-width="1.8"/></svg>
<svg style="left:882.5px;top:66.3px;" width="7" height="7" viewBox="0 0 7 7"><rect x="0" y="0.3" width="7" height="1.3" fill="#1e1e1e"/><path d="M0.3 3.200H6.700L3.5 6.500Z" fill="#1e1e1e"/></svg>
<svg style="left:12px;top:7px;" width="21" height="21" viewBox="0 0 21 21"><g fill="#9450e8"><path d="M15 0L20 1.500V19L15 20Z"/><path d="M0 15L15 16.500V20H14L0 16Z"/><path fill-rule="evenodd" d="M1 5.500L4 7L9.5 3L12.5 4V13.500L9.5 14.500L4 10.500L1 12ZM9.5 6L5.5 8.750L9.5 11.500ZM2 7.500V10L3.3 8.750Z"/></g></svg>
<svg style="left:1228.5px;top:6px;" width="13" height="15" viewBox="0 0 13 15"><path d="M0.3 0.500h12.400L8 6.500v7.800L5 12V6.500z" fill="#1e1e1e"/></svg>
<div style="left:1244.5px;top:9.5px;width:13.5px;height:12.0px;background:#6b3bbd;"></div>
<span class="t" style="left:1248.3px;top:7.72px;height:16px;line-height:16px;font-size:11.5px;color:#fff;transform:scaleX(0.9695);">2</span>
<svg style="left:1271.5px;top:6px;" width="15" height="15" viewBox="0 0 15 15"><circle cx="4.3" cy="6.5" r="2.5" fill="#1e1e1e"/><path d="M0.5 14.500v-3c0-2.5 7.5-2.5 7.5 0v3z" fill="#1e1e1e"/><path d="M6.5 0.500h8v5.500h-4l-1.8 2v-2H6.500z" fill="#d6dbe9" stroke="#1e1e1e" stroke-width="1"/></svg>
<svg style="left:1479px;top:6.5px;" width="13" height="13" viewBox="0 0 13 13"><circle cx="8" cy="5" r="3.6" fill="none" stroke="#555" stroke-width="1.5"/><path d="M5.5 7.500L1 12" stroke="#555" stroke-width="2"/></svg>
<div style="left:1510.5px;top:15.5px;width:10.0px;height:2.5px;background:#1e1e1e;"></div>
<svg style="left:1544px;top:8.5px;" width="12" height="11" viewBox="0 0 12 11"><rect x="0.7" y="3.2" width="7.6" height="7" fill="none" stroke="#1e1e1e" stroke-width="1.4"/><path d="M3 3V0.800h8v7H8.5" fill="none" stroke="#1e1e1e" stroke-width="1.4"/></svg>
<svg style="left:1577.5px;top:9px;" width="11" height="10" viewBox="0 0 11 10"><path d="M0.8 0.500l9.4 9M10.2 0.500l-9.4 9" stroke="#1e1e1e" stroke-width="1.7"/></svg>
<svg style="left:1559.0px;top:39.5px;" width="7" height="4" viewBox="0 0 7 4"><path d="M0.3 0.300H6.700L3.5 3.700Z" fill="#1e1e1e"/></svg>
<svg style="left:156px;top:93.7px;" width="8" height="5" viewBox="0 0 8 5"><path d="M0.3 0.300H7.700L4 4.500Z" fill="#dfe4f0"/></svg>
<svg style="left:173px;top:91.0px;" width="8" height="12" viewBox="0 0 8 12"><path d="M2 0.500h4M2.2 0.500v5.500M5.8 0.500v5.500M0.5 6.300h7M4 6.300v5" fill="none" stroke="#dfe4f0" stroke-width="1.1"/><rect x="4.3" y="1" width="1.5" height="5" fill="#dfe4f0"/></svg>
<svg style="left:188.5px;top:92.0px;" width="10" height="10" viewBox="0 0 10 10"><path d="M0.6 0.6l8.6 8.4M9.2 0.6l-8.6 8.4" stroke="#dfe4f0" stroke-width="1.3"/></svg>
<svg style="left:1520.5px;top:93.7px;" width="8" height="5" viewBox="0 0 8 5"><path d="M0.3 0.300H7.700L4 4.500Z" fill="#dfe4f0"/></svg>
<svg style="left:1536.5px;top:91.0px;" width="8" height="12" viewBox="0 0 8 12"><path d="M2 0.500h4M2.2 0.500v5.500M5.8 0.500v5.500M0.5 6.300h7M4 6.300v5" fill="none" stroke="#dfe4f0" stroke-width="1.1"/><rect x="4.3" y="1" width="1.5" height="5" fill="#dfe4f0"/></svg>
<svg style="left:1552.5px;top:92.0px;" width="10" height="10" viewBox="0 0 10 10"><path d="M0.6 0.6l8.6 8.4M9.2 0.6l-8.6 8.4" stroke="#dfe4f0" stroke-width="1.3"/></svg>
<svg style="left:1340px;top:709.2px;" width="8" height="5" viewBox="0 0 8 5"><path d="M0.3 0.300H7.700L4 4.500Z" fill="#dfe4f0"/></svg>
<svg style="left:1356.5px;top:706.5px;" width="8" height="12" viewBox="0 0 8 12"><path d="M2 0.500h4M2.2 0.500v5.500M5.8 0.500v5.500M0.5 6.300h7M4 6.300v5" fill="none" stroke="#dfe4f0" stroke-width="1.1"/><rect x="4.3" y="1" width="1.5" height="5" fill="#dfe4f0"/></svg>
<svg style="left:1372.5px;top:707.5px;" width="10" height="10" viewBox="0 0 10 10"><path d="M0.6 0.6l8.6 8.4M9.2 0.6l-8.6 8.4" stroke="#dfe4f0" stroke-width="1.3"/></svg>
<svg style="left:1520.5px;top:982.7px;" width="8" height="5" viewBox="0 0 8 5"><path d="M0.3 0.300H7.700L4 4.500Z" fill="#dfe4f0"/></svg>
<svg style="left:1536.5px;top:980.0px;" width="8" height="12" viewBox="0 0 8 12"><path d="M2 0.500h4M2.2 0.500v5.500M5.8 0.500v5.500M0.5 6.300h7M4 6.300v5" fill="none" stroke="#dfe4f0" stroke-width="1.1"/><rect x="4.3" y="1" width="1.5" height="5" fill="#dfe4f0"/></svg>
<svg style="left:1552.5px;top:981.0px;" width="10" height="10" viewBox="0 0 10 10"><path d="M0.6 0.6l8.6 8.4M9.2 0.6l-8.6 8.4" stroke="#dfe4f0" stroke-width="1.3"/></svg>
<svg style="left:363px;top:91.5px;" width="10" height="8" viewBox="0 0 10 8"><path d="M0.5 4h3.500M4 0.800v6.400M4 1.500h5v4h-5" fill="none" stroke="#5a5228" stroke-width="1.1"/><path d="M4 5h5" stroke="#5a5228" stroke-width="1.8"/></svg>
<svg style="left:381.5px;top:90px;" width="10" height="10" viewBox="0 0 10 10"><path d="M0.8 0.500l8.4 9M9.2 0.500l-8.4 9" stroke="#6a6030" stroke-width="1.4"/></svg>
<svg style="left:1341px;top:90px;" width="11" height="10" viewBox="0 0 11 10"><path d="M2.5 3h6.500l1.5 6h-9.500z" fill="#d0d6e6"/><path d="M0.5 0.500l3 3M4.5 0v3" stroke="#d0d6e6" stroke-width="1.1"/></svg>
<svg style="left:1359.5px;top:90px;" width="10" height="10" viewBox="0 0 10 10"><path d="M0.8 0.500l8.4 9M9.2 0.500l-8.4 9" stroke="#dfe4f0" stroke-width="1.4"/></svg>
<svg style="left:1378px;top:93.5px;" width="9" height="5" viewBox="0 0 9 5"><path d="M0.3 0.300H8.700L4.5 4.700Z" fill="#dfe4f0"/></svg>
<svg style="left:214.8px;top:109.5px;" width="15" height="14" viewBox="0 0 15 14"><rect x="3" y="0.5" width="11" height="10.5" fill="#fff" stroke="#333"/><rect x="3" y="0.5" width="11" height="2.2" fill="#333"/><circle cx="4.8" cy="9" r="4.6" fill="#1b5fae"/><path d="M0.5 9h8.600M4.8 4.600v8.800M1.5 6.500h6.600M1.5 11.500h6.6" stroke="#fff" stroke-width="0.7"/><ellipse cx="4.8" cy="9" rx="2" ry="4.4" fill="none" stroke="#fff" stroke-width="0.7"/></svg>
<svg style="left:608px;top:110px;" width="15" height="14" viewBox="0 0 15 14"><path d="M1 4.500l4.5-3.5 3 3-4.5 3.500z" fill="#c27d1a"/><path d="M7.5 5.500v6h3M7.5 8h3" fill="none" stroke="#c27d1a" stroke-width="1.1"/><rect x="10.5" y="6.5" width="3.5" height="3" fill="#c27d1a"/><rect x="10.5" y="10.3" width="3.5" height="3" fill="#c27d1a"/></svg>
<svg style="left:1002px;top:110.5px;" width="14" height="14" viewBox="0 0 14 14"><path d="M12.8 2.600l-2.4 2.4-1.8-.4-.4-1.800L10.6.5C8.8-.2 6 1 6.3 4.200L.6 10.400c-1 1.2 1.1 3.3 2.3 2.300L8.8 7c2.8.7 4.9-1.4 4-4.400z" fill="#424242"/></svg>
<svg style="left:592.0px;top:115.5px;" width="7" height="4" viewBox="0 0 7 4"><path d="M0.3 0.300H6.700L3.5 3.700Z" fill="#1e1e1e"/></svg>
<svg style="left:984.5px;top:115.5px;" width="7" height="4" viewBox="0 0 7 4"><path d="M0.3 0.300H6.700L3.5 3.700Z" fill="#1e1e1e"/></svg>
<svg style="left:1378.5px;top:115.5px;" width="7" height="4" viewBox="0 0 7 4"><path d="M0.3 0.300H6.700L3.5 3.700Z" fill="#1e1e1e"/></svg>
<svg style="left:1373px;top:129px;" width="12" height="14" viewBox="0 0 12 14"><path d="M0.5 6h11M0.5 8.500h11" stroke="#1b2a4a" stroke-width="1.2"/><path d="M6 0.800v4.500M6 9v4.3" stroke="#1b2a4a" stroke-width="1.2"/><path d="M3.8 3L6 0.6 8.2 3M3.8 11L6 13.4 8.2 11" fill="none" stroke="#1b2a4a" stroke-width="1.1"/></svg>
<svg style="left:1374.0px;top:151.5px;" width="9" height="5" viewBox="0 0 9 5"><path d="M0 5L4.5 0 9 5Z" fill="#868999"/></svg>
<svg style="left:1374.0px;top:665.5px;" width="9" height="5" viewBox="0 0 9 5"><path d="M0 0L4.5 5 9 0Z" fill="#868999"/></svg>
<svg style="left:278.0px;top:681.0px;" width="5" height="9" viewBox="0 0 5 9"><path d="M5 0L0 4.5 5 9Z" fill="#c9cad2"/></svg>
<svg style="left:1358.0px;top:681.0px;" width="5" height="9" viewBox="0 0 5 9"><path d="M0 0L5 4.5 0 9Z" fill="#c9cad2"/></svg>
<svg style="left:1375.0px;top:755.0px;" width="9" height="5" viewBox="0 0 9 5"><path d="M0 5L4.5 0 9 5Z" fill="#868999"/></svg>
<svg style="left:1375.0px;top:1081.5px;" width="9" height="5" viewBox="0 0 9 5"><path d="M0 0L4.5 5 9 0Z" fill="#868999"/></svg>
<svg style="left:218.0px;top:1097.0px;" width="5" height="9" viewBox="0 0 5 9"><path d="M5 0L0 4.5 5 9Z" fill="#868999"/></svg>
<svg style="left:1360.0px;top:1097.0px;" width="5" height="9" viewBox="0 0 5 9"><path d="M0 0L5 4.5 0 9Z" fill="#868999"/></svg>
<svg style="left:13.0px;top:1097.0px;" width="5" height="9" viewBox="0 0 5 9"><path d="M5 0L0 4.5 5 9Z" fill="#868999"/></svg>
<svg style="left:193.0px;top:1097.0px;" width="5" height="9" viewBox="0 0 5 9"><path d="M0 0L5 4.5 0 9Z" fill="#868999"/></svg>
<svg style="left:1402.0px;top:934.0px;" width="5" height="9" viewBox="0 0 5 9"><path d="M5 0L0 4.5 5 9Z" fill="#868999"/></svg>
<svg style="left:1557.0px;top:934.0px;" width="5" height="9" viewBox="0 0 5 9"><path d="M0 0L5 4.5 0 9Z" fill="#868999"/></svg>
<svg style="left:262.5px;top:684px;" width="7" height="4" viewBox="0 0 7 4"><path d="M0.3 0.300H6.700L3.5 3.700Z" fill="#1e1e1e"/></svg>
<svg style="left:1558.0px;top:1006.5px;" width="7" height="4" viewBox="0 0 7 4"><path d="M0.3 0.300H6.700L3.5 3.700Z" fill="#1e1e1e"/></svg>
<svg style="left:15px;top:113px;" width="14" height="15" viewBox="0 0 14 15"><path d="M11.7 8.800A5.2 5.2 0 1 1 6.5 3.6" fill="none" stroke="#1158b4" stroke-width="2.3"/><path d="M6 0L11.3 3.7 6 7.400z" fill="#1158b4"/></svg>
<div style="left:36px;top:111px;width:1px;height:18px;background:#8591ab;"></div>
<svg style="left:45px;top:112.5px;" width="13" height="15" viewBox="0 0 13 15"><rect x="4" y="1.5" width="8.5" height="13" fill="#3a3a3a"/><path d="M5.5 4h5.500M5.5 6.500h5.5" stroke="#cfd6e5" stroke-width="0.9"/><circle cx="9.5" cy="12" r="0.9" fill="#cfd6e5"/><path d="M3 0v6M0 3h6" stroke="#2a8a2a" stroke-width="1.7"/></svg>
<svg style="left:66.5px;top:113px;" width="15" height="14" viewBox="0 0 15 14"><path d="M3.5 0v7M0 3.500h7M1 1l5 5M6 1L1 6" stroke="#d07a18" stroke-width="0.9"/><rect x="7.5" y="4.5" width="7" height="5" fill="#cfd6e5" stroke="#2a2a2a" stroke-width="1.1"/><rect x="5" y="8" width="7" height="5" fill="#cfd6e5" stroke="#2a2a2a" stroke-width="1.1"/><path d="M5 9.500h7" stroke="#2a2a2a" stroke-width="1.2"/></svg>
<div style="left:1558px;top:107px;width:10px;height:28px;background:#dfe4f0;"></div>
<svg style="left:1404.5px;top:114.5px;" width="13" height="13" viewBox="0 0 13 13"><circle cx="6.5" cy="6.5" r="5.8" fill="#b4b9c6"/><path d="M10 6.500H4M6.5 3.800L3.7 6.500l2.8 2.7" fill="none" stroke="#dfe4f0" stroke-width="1.5"/></svg>
<svg style="left:1426.5px;top:114.5px;" width="13" height="13" viewBox="0 0 13 13"><circle cx="6.5" cy="6.5" r="5.8" fill="#b4b9c6"/><path d="M3 6.500h6M6.5 3.800l2.8 2.7-2.8 2.7" fill="none" stroke="#dfe4f0" stroke-width="1.5"/></svg>
<svg style="left:1447.5px;top:113.5px;" width="15" height="15" viewBox="0 0 15 15"><path d="M1 8L7.5 1.5 14 8M10.5 4V1.500h1.500V5.5" fill="none" stroke="#2a2a2a" stroke-width="1.3"/><path d="M2.8 7.500V14h9.400V7.500L7.5 3z" fill="#f4f5f8" stroke="#2a2a2a" stroke-width="1.2"/><rect x="6.2" y="9.5" width="2.8" height="4.5" fill="#2a2a2a"/></svg>
<svg style="left:1470.5px;top:113.5px;" width="16" height="15" viewBox="0 0 16 15"><path d="M6.5 1h3l1-1h4v8h-8z" fill="#dca45c"/><rect x="1" y="6.5" width="8.5" height="7" fill="#dfe4f0" stroke="#2a2a2a" stroke-width="1.1"/><path d="M1 8h8.5" stroke="#2a2a2a" stroke-width="1.3"/><path d="M2.5 5V2.500h3M4.2 0.800L6 2.5 4.2 4.2" fill="none" stroke="#0e58b8" stroke-width="1.2"/><path d="M14.5 10v2.500h-3M13 10.800l-1.8 1.7 1.8 1.7" fill="none" stroke="#0e58b8" stroke-width="1.2"/></svg>
<svg style="left:1491.5px;top:119.5px;" width="7" height="4" viewBox="0 0 7 4"><path d="M0.3 0.300H6.700L3.5 3.700Z" fill="#1e1e1e"/></svg>
<div style="left:1504px;top:111px;width:1px;height:20px;background:#8591ab;"></div>
<svg style="left:1515px;top:113.5px;" width="14" height="15" viewBox="0 0 14 15"><path d="M0.3 0.500h5L3.5 2.500V5h-1.500V2.500z" fill="#2a2a2a"/><circle cx="8.5" cy="9.5" r="4.7" fill="#eef0f6" stroke="#2a2a2a" stroke-width="1.2"/><path d="M8.5 6.500v3.300h2.8" fill="none" stroke="#2a2a2a" stroke-width="1.1"/></svg>
<svg style="left:1534.5px;top:119.5px;" width="7" height="4" viewBox="0 0 7 4"><path d="M0.3 0.300H6.700L3.5 3.700Z" fill="#1e1e1e"/></svg>
<svg style="left:1559.5px;top:111.5px;" width="7" height="4" viewBox="0 0 7 4"><path d="M0 0l2.2 2L0 4zM4 0l2.2 2L4 4z" fill="#1e1e1e"/></svg>
<svg style="left:1540px;top:139px;" width="14" height="14" viewBox="0 0 14 14"><circle cx="9" cy="5" r="3.6" fill="none" stroke="#555" stroke-width="1.5"/><path d="M6.5 7.500L1.5 12.5" stroke="#555" stroke-width="2.2"/></svg>
<svg style="left:1558.0px;top:143.5px;" width="7" height="4" viewBox="0 0 7 4"><path d="M0.3 0.300H6.700L3.5 3.700Z" fill="#666"/></svg>
<svg style="left:1402.5px;top:1026px;" width="15" height="14" viewBox="0 0 15 14"><rect x="0.5" y="0.5" width="5" height="5" fill="#2a2a2a"/><path d="M1.5 3h3M3 1.500v3" stroke="#fff" stroke-width="0.9"/><rect x="0.5" y="8.5" width="5" height="5" fill="#2a2a2a"/><path d="M1.5 11h3M3 9.500v3" stroke="#fff" stroke-width="0.9"/><path d="M7 1h7M7 3.200h7M7 5.400h5M7 9h7M7 11.200h7M7 13.400h5" stroke="#2a2a2a" stroke-width="1" stroke-dasharray="1.5 0.7"/></svg>
<svg style="left:1425px;top:1025.5px;" width="17" height="16" viewBox="0 0 17 16"><rect x="0.5" y="0.5" width="7.5" height="7" fill="#3a3a3a"/><text x="4.2" y="6.6" font-family="Liberation Sans" font-weight="bold" font-size="7.5" fill="#fff" text-anchor="middle">A</text><text x="4.2" y="15.3" font-family="Liberation Sans" font-weight="bold" font-size="9" fill="#1e1e1e" stroke="#1e1e1e" stroke-width="0.4" text-anchor="middle">Z</text><path d="M12 3.5v8M9.3 8.8l2.7 3 2.7-3" fill="none" stroke="#0e3aa8" stroke-width="1.7"/></svg>
<svg style="left:1454.5px;top:1025.5px;" width="16" height="16" viewBox="0 0 16 16"><path d="M13.8 2.800l-2.6 2.6-1.9-.4-.4-1.900L11.5.5C9.5-.3 6.5 1 6.8 4.500L.6 11.300c-1 1.3 1.2 3.5 2.5 2.500L9.5 7.500c3 .8 5.3-1.5 4.3-4.700z" fill="#a4a8b4"/></svg>
<svg style="left:220px;top:727.5px;" width="15" height="17" viewBox="0 0 15 17"><path d="M5.5 1.500C2 1.5 2 6 5.5 6" fill="none" stroke="#a9adb8" stroke-width="1.1"/><path d="M3.5 3.500L5.8 6 3.5 8.5" fill="none" stroke="#a9adb8" stroke-width="1"/><path d="M6 9h8M2.5 12h5M2.5 15h10" stroke="#a9adb8" stroke-width="1.2"/></svg>
<svg style="left:251px;top:729px;" width="13" height="13" viewBox="0 0 13 13"><path d="M7 2.500H1.500M3.5 0.500L1.3 2.500l2.2 2" fill="none" stroke="#a9adb8" stroke-width="1.1"/><path d="M2 7.500h10M2 10.500h10" stroke="#a9adb8" stroke-width="1.4"/><path d="M5.5 5h6" stroke="#a9adb8" stroke-width="1.1"/></svg>
<svg style="left:273px;top:729px;" width="13" height="13" viewBox="0 0 13 13"><path d="M0.5 2.500H6M4 0.500l2.2 2-2.2 2" fill="none" stroke="#a9adb8" stroke-width="1.1"/><path d="M2 7.500h10M2 10.500h10" stroke="#a9adb8" stroke-width="1.4"/><path d="M5.5 5h6.5" stroke="#a9adb8" stroke-width="1.1"/></svg>
<svg style="left:302.5px;top:728px;" width="14" height="16" viewBox="0 0 14 16"><path d="M1 1l5 5.500M6 1L1 6.5" stroke="#b0281a" stroke-width="1.3"/><path d="M7 2.500h6.500M7 5.500h6.500M1 9h12.500M1 12h12.500M1 15h12.5" stroke="#1e1e1e" stroke-width="1.5"/></svg>
<svg style="left:323px;top:729px;" width="16" height="15" viewBox="0 0 16 15"><path d="M1.5 3c3 2 7 6.5 9.5 11M13.5 1C9 5 5 9.5 2 13.5" fill="none" stroke="#a8200e" stroke-width="2.6"/></svg>
<svg style="left:356px;top:730px;" width="11" height="11" viewBox="0 0 11 11"><path d="M1 1c3 3 5 6 7 9M9.5 1C7 3.5 3.5 7 1.5 10" fill="none" stroke="#a9adb8" stroke-width="1.2"/></svg>
<svg style="left:4px;top:1142.5px;" width="17" height="13" viewBox="0 0 17 13"><path d="M3 0.800h13l-2 11.400H1z" fill="none" stroke="#fff" stroke-width="1.2"/><path d="M5 4h8M4.5 6.500h8M4 9h6" stroke="#fff" stroke-width="1.1"/></svg>
<svg style="left:1313.5px;top:1143px;" width="9" height="12" viewBox="0 0 9 12"><path d="M4.5 11.500V1.500M0.8 5.200L4.5 1.300l3.7 3.9" fill="none" stroke="#fff" stroke-width="1.6"/></svg>
<svg style="left:1362px;top:1143px;" width="12" height="12" viewBox="0 0 12 12"><path d="M1 11l.8-3L8.5 1.300l2.2 2.200L4 10.200z" fill="#fff"/></svg>
<svg style="left:1411px;top:1141.5px;" width="15" height="15" viewBox="0 0 15 15"><path d="M7.5 0.500l7 7-7 7-7-7z" fill="#fff"/><path d="M5.5 4l4 4M7.5 6v5" stroke="#007acc" stroke-width="1.2"/><circle cx="5.5" cy="4" r="1" fill="#007acc"/><circle cx="9.5" cy="8" r="1.1" fill="#007acc"/><circle cx="7.5" cy="11" r="1.1" fill="#007acc"/></svg>
<svg style="left:1507px;top:1142px;" width="16" height="14" viewBox="0 0 16 14"><path d="M3 2.500l5 5v5.500M13 2.500l-5 5" fill="none" stroke="#fff" stroke-width="1.8"/><circle cx="3" cy="2.5" r="2.2" fill="#fff"/><circle cx="13" cy="2.5" r="2.2" fill="#fff"/><path d="M1 6.500l2.2-1 1 2.5" fill="none" stroke="#fff" stroke-width="1"/></svg>
<svg style="left:1571.5px;top:1146px;" width="8" height="5" viewBox="0 0 8 5"><path d="M0 5L4 0.5 8 5Z" fill="#fff"/></svg>
<svg style="left:452.8px;top:359.9px;" width="10" height="10" viewBox="0 0 10 10"><path d="M5 0.7l3.9 2.2v4.2L5 9.3 1.1 7.1V2.9z" fill="#fff" stroke="#6f2da8" stroke-width="1.1"/><path d="M1.4 3.1l3.6 2 3.6-2M5 5.1v4" fill="none" stroke="#6f2da8" stroke-width="0.9"/></svg>
<svg style="left:452.8px;top:378.9px;" width="10" height="10" viewBox="0 0 10 10"><path d="M5 0.7l3.9 2.2v4.2L5 9.3 1.1 7.1V2.9z" fill="#fff" stroke="#6f2da8" stroke-width="1.1"/><path d="M1.4 3.1l3.6 2 3.6-2M5 5.1v4" fill="none" stroke="#6f2da8" stroke-width="0.9"/></svg>
<svg style="left:452.8px;top:397.9px;" width="10" height="10" viewBox="0 0 10 10"><path d="M5 0.7l3.9 2.2v4.2L5 9.3 1.1 7.1V2.9z" fill="#fff" stroke="#6f2da8" stroke-width="1.1"/><path d="M1.4 3.1l3.6 2 3.6-2M5 5.1v4" fill="none" stroke="#6f2da8" stroke-width="0.9"/></svg>
<svg style="left:452.8px;top:416.9px;" width="10" height="10" viewBox="0 0 10 10"><path d="M5 0.7l3.9 2.2v4.2L5 9.3 1.1 7.1V2.9z" fill="#fff" stroke="#6f2da8" stroke-width="1.1"/><path d="M1.4 3.1l3.6 2 3.6-2M5 5.1v4" fill="none" stroke="#6f2da8" stroke-width="0.9"/></svg>
<svg style="left:452.8px;top:435.9px;" width="10" height="10" viewBox="0 0 10 10"><path d="M5 0.7l3.9 2.2v4.2L5 9.3 1.1 7.1V2.9z" fill="#fff" stroke="#6f2da8" stroke-width="1.1"/><path d="M1.4 3.1l3.6 2 3.6-2M5 5.1v4" fill="none" stroke="#6f2da8" stroke-width="0.9"/></svg>
<svg style="left:452.8px;top:454.9px;" width="10" height="10" viewBox="0 0 10 10"><path d="M5 0.7l3.9 2.2v4.2L5 9.3 1.1 7.1V2.9z" fill="#fff" stroke="#6f2da8" stroke-width="1.1"/><path d="M1.4 3.1l3.6 2 3.6-2M5 5.1v4" fill="none" stroke="#6f2da8" stroke-width="0.9"/></svg>
<svg style="left:452.8px;top:473.9px;" width="10" height="10" viewBox="0 0 10 10"><path d="M5 0.7l3.9 2.2v4.2L5 9.3 1.1 7.1V2.9z" fill="#fff" stroke="#6f2da8" stroke-width="1.1"/><path d="M1.4 3.1l3.6 2 3.6-2M5 5.1v4" fill="none" stroke="#6f2da8" stroke-width="0.9"/></svg>
<svg style="left:452.8px;top:492.9px;" width="10" height="10" viewBox="0 0 10 10"><path d="M5 0.7l3.9 2.2v4.2L5 9.3 1.1 7.1V2.9z" fill="#fff" stroke="#6f2da8" stroke-width="1.1"/><path d="M1.4 3.1l3.6 2 3.6-2M5 5.1v4" fill="none" stroke="#6f2da8" stroke-width="0.9"/></svg>
<svg style="left:557.5px;top:397.5px;" width="13" height="20" viewBox="0 0 13 20"><path d="M0.5 0.700v15.800l3.7-3.5 2.6 6 2.3-1-2.6-5.800h5.200z" fill="#fff" stroke="#000" stroke-width="1"/></svg>
<div style="left:0px;top:1160px;width:1600px;height:40px;background:#201e1b;"></div>
<div style="left:627px;top:1160px;width:39px;height:40px;background:#454341;"></div>
<div style="left:666px;top:1162px;width:1px;height:38px;background:#5a5856;"></div>
<div style="left:103px;top:1198px;width:34px;height:2px;background:#76b9ed;"></div>
<div style="left:147px;top:1198px;width:34px;height:2px;background:#76b9ed;"></div>
<div style="left:191px;top:1198px;width:34px;height:2px;background:#76b9ed;"></div>
<div style="left:235px;top:1198px;width:34px;height:2px;background:#76b9ed;"></div>
<div style="left:455px;top:1198px;width:34px;height:2px;background:#76b9ed;"></div>
<div style="left:499px;top:1198px;width:34px;height:2px;background:#76b9ed;"></div>
<div style="left:674px;top:1198px;width:34px;height:2px;background:#76b9ed;"></div>
<div style="left:894px;top:1198px;width:34px;height:2px;background:#76b9ed;"></div>
<div style="left:1109px;top:1198px;width:34px;height:2px;background:#76b9ed;"></div>
<div style="left:1152px;top:1198px;width:34px;height:2px;background:#76b9ed;"></div>
<div style="left:1194px;top:1198px;width:34px;height:2px;background:#76b9ed;"></div>
<div style="left:1238px;top:1198px;width:34px;height:2px;background:#76b9ed;"></div>
<div style="left:627px;top:1198px;width:39px;height:2px;background:#76b9ed;"></div>
<div style="left:129px;top:1198px;width:8px;height:2px;background:#4f7a9a;"></div>
<div style="left:261px;top:1198px;width:8px;height:2px;background:#4f7a9a;"></div>
<div style="left:665px;top:1198px;width:4px;height:2px;background:#4f7a9a;"></div>
<svg style="left:12.6px;top:1168.6px;" width="22.8" height="22.8" viewBox="0 0 24 24"><path d="M3.5 6.6l7.3-1v6.9H3.5zM11.8 5.4l8.7-1.3v8.4h-8.7zM3.5 13.5h7.3v6.9l-7.3-1zM11.8 13.5h8.7v8.4l-8.7-1.3z" fill="#fff"/></svg>
<svg style="left:59.5px;top:1168.0px;" width="24.0" height="24.0" viewBox="0 0 24 24"><g fill="none" stroke="#fff" stroke-width="1.3"><rect x="5" y="7.5" width="9.5" height="9"/><path d="M3 4.5h13.5M3 19.5h13.5M19 4.5v2M19 9v6M19 17.5v2"/></g><rect x="18" y="9" width="2.3" height="6" fill="#fff"/></svg>
<svg style="left:107.16px;top:1167.16px;" width="25.68" height="25.68" viewBox="0 0 24 24"><circle cx="12" cy="12.5" r="10.3" fill="#ff9a1e"/><circle cx="12.8" cy="11.5" r="6.8" fill="#4659d6"/><path d="M1.8 11c1.5-6 6.5-8.5 10-8-2 1-3 2.5-2.5 4 2.5 0 4 1 4 3-2-.5-4 0-4.5 2 1 2 4 2 5.5 1-.5 4.5-5 6.5-9 5-3.200-1.5-4.200-4.5-3.5-7z" fill="#f0561a"/><path d="M13.5 1.300c4 .8 7.5 4 8.300 8.200l-3.300-1.5z" fill="#ffd23a"/></svg>
<svg style="left:151.16px;top:1167.16px;" width="25.68" height="25.68" viewBox="0 0 24 24"><rect x="1" y="2.5" width="22" height="19" fill="#050505" stroke="#8c8c8c" stroke-width="1"/><rect x="1.5" y="3" width="21" height="2.5" fill="#bdbdbd"/><path d="M4 9h3M8.5 9.5h2M12 11h6" stroke="#ddd" stroke-width="1.3"/></svg>
<svg style="left:195.16px;top:1167.16px;" width="25.68" height="25.68" viewBox="0 0 24 24"><path d="M3 8l8-3 10 2-2 12-9-2-8 3z" fill="#3f8f3a"/><path d="M12 5l9 2-1 6-9-1.5z" fill="#e9b52b"/><path d="M3 8l8-3-.5 6.5L2 14z" fill="#d84a2a"/><path d="M2 14l8.5-2.5L19 13l-.5 6-8.5-2-8 3z" fill="#3e6fd0"/><circle cx="9" cy="9" r="5.2" fill="#cfe8fa" stroke="#7fa9cc" stroke-width="1.6"/><path d="M13 13l7 7.5" stroke="#b47a3a" stroke-width="2.6"/></svg>
<svg style="left:239.16px;top:1167.16px;" width="25.68" height="25.68" viewBox="0 0 24 24"><path d="M1 4.5h7l2 2h12.5v14H1z" fill="#e9b84d"/><path d="M1 8h21.5v12.5H1z" fill="#f7d674"/><path d="M6 14h12v7H6z" fill="#3ea6e6"/><path d="M9.5 17.5h5V21h-5z" fill="#f7d674"/></svg>
<svg style="left:283.16px;top:1167.16px;" width="25.68" height="25.68" viewBox="0 0 24 24"><path d="M1.5 1.5h19l2.5 2.5v19h-21.5z" fill="#1414c8"/><rect x="7" y="1.5" width="10" height="7" fill="#d9d9d9"/><rect x="12.5" y="2.5" width="3" height="5" fill="#1414c8"/><rect x="4" y="11" width="16" height="12" fill="#f4f4f4"/><path d="M4 13h16M4 16h16M4 19h16M4 22h16" stroke="#e02020" stroke-width="1.8"/></svg>
<svg style="left:328.0px;top:1168.0px;" width="24.0" height="24.0" viewBox="0 0 24 24"><rect x="1.5" y="1.5" width="21" height="21" fill="#0c1c4a" stroke="#6f9bf0" stroke-width="1.5"/><text x="12" y="17" font-family="Liberation Sans" font-weight="bold" font-size="12" fill="#7fb0ff" text-anchor="middle">Ps</text></svg>
<svg style="left:371.16px;top:1167.16px;" width="25.68" height="25.68" viewBox="0 0 24 24"><path d="M1.5 13.5l9.5-7.5h-5l1.8-2h6l7 5.5c3 3 1.5 8.5-4 9.5-5 .5-8-2-8-5.5h-5z" fill="#f5792a"/><circle cx="15" cy="13.5" r="4.3" fill="#fff"/><circle cx="15" cy="13.5" r="2.6" fill="#2a62c8"/></svg>
<svg style="left:415.16px;top:1167.16px;" width="25.68" height="25.68" viewBox="0 0 24 24"><path d="M3.5 15C2 7 6.5 2.5 12 2.5S22 7 20.5 15" fill="none" stroke="#1a3be0" stroke-width="2.6"/><rect x="1.5" y="12" width="4.5" height="9" rx="2" fill="#1a3be0"/><rect x="18" y="12" width="4.5" height="9" rx="2" fill="#1a3be0"/><circle cx="12" cy="14" r="6" fill="#f08a1c"/><path d="M7 15h10" stroke="#d42a1a" stroke-width="3"/></svg>
<svg style="left:459.16px;top:1167.16px;" width="25.68" height="25.68" viewBox="0 0 24 24"><path d="M3 1.5h14l4 4v17H3z" fill="#f2f2ea" stroke="#9a9a9a"/><rect x="3.5" y="14" width="17" height="8" fill="#7ed04a"/><path d="M7 6v8M10 8v5M10 10h5" stroke="#333" stroke-width="1.3"/><path d="M21 2l-8 12" stroke="#e8a320" stroke-width="2.6"/></svg>
<svg style="left:503.16px;top:1167.16px;" width="25.68" height="25.68" viewBox="0 0 24 24"><path d="M2 14c4-6 15-6 20 0-5 5-16 5-20 0z" fill="none" stroke="#e8a21a" stroke-width="1.8"/><circle cx="12" cy="14" r="3.8" fill="#c81e1e"/><circle cx="12" cy="14" r="1.5" fill="#2a0a0a"/><path d="M6 5l1.5 2.5M12 3.5v3M18 5l-1.5 2.5" stroke="#e8a21a" stroke-width="2.2"/></svg>
<svg style="left:547.16px;top:1167.16px;" width="25.68" height="25.68" viewBox="0 0 24 24"><rect x="3.5" y="2" width="6" height="9" fill="#e8b040"/><path d="M11 3h9v9M3 13v8h9" fill="none" stroke="#4aa83a" stroke-width="1.3" stroke-dasharray="2 1.5"/><path d="M10 11l11 11" stroke="#c8ccd4" stroke-width="3"/><path d="M20 11L10 22" stroke="#8a96a8" stroke-width="2.6"/></svg>
<svg style="left:591.16px;top:1167.16px;" width="25.68" height="25.68" viewBox="0 0 24 24"><path d="M12 12.5c-2.5-4-8-4.5-9.5-.5s4 6 9.5.5c4-5 10-4 9.5 0s-6.5 4.5-9.5 0z" fill="none" stroke="#3a7ae0" stroke-width="3"/><path d="M13 12c3-4 8-3.5 8.5-.5" fill="none" stroke="#7a3ac8" stroke-width="2.6"/></svg>
<svg style="left:632.59px;top:1167.09px;" width="27.82" height="27.82" viewBox="0 0 26 26"><g fill="#9a5ee6"><path d="M18 1L24 3V24L18 25.5Z"/><path d="M1 19.5L18 21.5V25.5H17L1 20.800Z"/><path fill-rule="evenodd" d="M2 7L5.5 9L12 4L15.5 5.5V17L12 18.5L5.5 13.5L2 15.5ZM12 8L7.3 11.250L12 14.5ZM3.3 9.5V13L5 11.250Z"/></g></svg>
<svg style="left:678.16px;top:1167.16px;" width="25.68" height="25.68" viewBox="0 0 24 24"><path d="M6 2.5l14 1.5-3 18L2.5 20z" fill="#bfe3f5" stroke="#6f8fa8"/><path d="M6 2.5l14 1.5-.5 2.5L5.5 5z" fill="#5a7a98"/><path d="M17 22l1.5-4 2.5-.5z" fill="#e8e8e8"/></svg>
<svg style="left:722.16px;top:1167.16px;" width="25.68" height="25.68" viewBox="0 0 24 24"><path d="M11 1.5H20.5Q22.5 1.5 22.5 3.5V11.5Q22.5 13.5 20.5 13.5H17.5V20Q17.5 22 15.5 22H4Q2 22 2 20V12Q2 10 4 10H9V3.5Q9 1.5 11 1.5Z" fill="#1c1b18" stroke="#62bb2e" stroke-width="2.8"/><rect x="5.5" y="12.5" width="5.5" height="5.5" fill="#f0a828"/><rect x="12.5" y="6" width="5.5" height="5.5" fill="#f0a828"/><path d="M10 13.5l3.5-3" stroke="#f0a828" stroke-width="3"/></svg>
<svg style="left:766.16px;top:1167.16px;" width="25.68" height="25.68" viewBox="0 0 24 24"><rect x="2" y="8" width="20" height="14" fill="#f4f4f4"/><path d="M2 8l19-5 1 3.5L3 11.5z" fill="#ddd" stroke="#222" stroke-width="1"/><path d="M5 7.300l2 3M10 6l2 3M15 4.700l2 3" stroke="#222" stroke-width="2"/><text x="12" y="20" font-family="Liberation Sans" font-weight="bold" font-size="9.5" text-anchor="middle"><tspan fill="#d03a2a">3</tspan><tspan fill="#3aa03a">2</tspan><tspan fill="#2a5ad0">1</tspan></text></svg>
<svg style="left:810.16px;top:1167.16px;" width="25.68" height="25.68" viewBox="0 0 24 24"><circle cx="12" cy="12" r="11" fill="#1f86d8"/><path d="M3 11c3-3 6-2 8 0 2-2.5 6-3 10-1-4 0-6 1-8 3.5C10 11 6 10.5 3 11zM5 16c2-1.5 4.5-1 6 .5 1.5-1.5 4-2 7-1-3 .2-5 1-6.5 3-1.5-2-4-2.7-6.5-2.5z" fill="#fff"/></svg>
<svg style="left:854.16px;top:1167.16px;" width="25.68" height="25.68" viewBox="0 0 24 24"><circle cx="9" cy="9" r="7.5" fill="#3a8ad8"/><path d="M4 6c2-2 4-1 5 1s-2 4-4 3zM10 11c2-1 4 0 4 2s-3 3-4 1z" fill="#5ab83a"/><path d="M2 2l6 1-2 4z" fill="#f0b030"/><rect x="13" y="7" width="8.5" height="15.5" fill="#b8bcc4" stroke="#6a6e78"/><path d="M14.5 10h5.5M14.5 13h5.5" stroke="#555" stroke-width="1.2"/><circle cx="17" cy="19" r="1.2" fill="#3ad03a"/></svg>
<svg style="left:898.16px;top:1167.16px;" width="25.68" height="25.68" viewBox="0 0 24 24"><rect x="1" y="1" width="22" height="22" rx="3" fill="#111" stroke="#444"/><text x="12.5" y="18" font-family="Liberation Sans" font-weight="bold" font-size="14" text-anchor="middle"><tspan fill="#2a6ae8" font-size="11">m</tspan><tspan fill="#e8e8e8">R</tspan></text></svg>
<svg style="left:940.16px;top:1167.16px;" width="25.68" height="25.68" viewBox="0 0 24 24"><path d="M5 6h14l3.5 12h-21z" fill="#d8dce4" stroke="#8a8e98"/><path d="M7.5 8h4l2 8h-7z" fill="#3a6ad8"/><path d="M13.5 8h4l2 8h-4.5z" fill="#4aa83a"/><text x="9.5" y="15" font-size="7" fill="#f0e040" font-family="Liberation Sans" text-anchor="middle">λ</text></svg>
<svg style="left:983.16px;top:1167.16px;" width="25.68" height="25.68" viewBox="0 0 24 24"><circle cx="12" cy="12" r="11" fill="#0b0b0b"/><path d="M5.5 8.5L18 5.5 13 19z" fill="none" stroke="#4aa8e8" stroke-width="2.2"/><circle cx="5.5" cy="8.5" r="3.3" fill="#5ab8f0"/><circle cx="18" cy="5.5" r="3.3" fill="#5ab8f0"/><circle cx="13" cy="19" r="3.3" fill="#5ab8f0"/></svg>
<svg style="left:1027.16px;top:1167.16px;" width="25.68" height="25.68" viewBox="0 0 24 24"><g fill="none" stroke="#f4f4f4" stroke-width="3.2"><ellipse cx="12" cy="12" rx="10" ry="4.2"/><ellipse cx="12" cy="12" rx="10" ry="4.2" transform="rotate(60 12 12)"/><ellipse cx="12" cy="12" rx="10" ry="4.2" transform="rotate(120 12 12)"/></g></svg>
<svg style="left:1069.09px;top:1166.09px;" width="27.82" height="27.82" viewBox="0 0 26 26"><path d="M17 1.5l5.5 2.300v16.400L17 22.5 6.5 13.8 3 16.5l-1.5-.8V8.300L3 7.5l3.5 2.700zM17 8l-6 4 6 4zM3.5 10v4l2-2z" fill="#8a4fd8"/></svg>
<svg style="left:1113.0px;top:1170.0px;" width="26.0" height="20.0" viewBox="0 0 26 20"><rect x="1" y="1" width="24" height="18" fill="#fff" stroke="#111" stroke-width="2"/><rect x="3.5" y="3.5" width="19" height="13" fill="#111"/><text x="13" y="15.3" font-family="Liberation Sans" font-weight="bold" font-size="13" fill="#fff" text-anchor="middle">7z</text></svg>
<svg style="left:1156.16px;top:1167.16px;" width="25.68" height="25.68" viewBox="0 0 24 24"><rect x="1.5" y="4.5" width="21" height="15" fill="#f4f6fa" stroke="#c8ccd4"/><path d="M4 8.5l1.2 1.2 2-2.400M4 13.5l1.2 1.2 2-2.4" fill="none" stroke="#2a7ad8" stroke-width="1.3"/><path d="M9.5 9h11M9.5 14h11" stroke="#a8acb4" stroke-width="1.3"/></svg>
<svg style="left:1198.0px;top:1167.0px;" width="26.0" height="26.0" viewBox="0 0 26 26"><rect x="0" y="0" width="26" height="26" rx="2" fill="#0e8ee9"/><circle cx="13" cy="13" r="10.3" fill="#fff"/><path d="M3.5 13l6-3.8v2.3h7v-2.3l6 3.8-6 3.8v-2.3h-7v2.3z" fill="#0e6fd0"/></svg>
<svg style="left:1242.16px;top:1167.16px;" width="25.68" height="25.68" viewBox="0 0 24 24"><rect x="0.5" y="0.5" width="23" height="23" fill="#b4141a" stroke="#7a0c10" stroke-dasharray="2 1"/><text x="12" y="19" font-family="Liberation Sans" font-weight="bold" font-style="italic" font-size="17" fill="#fff" text-anchor="middle">Fz</text></svg>
<svg style="left:1284.5px;top:1174px;" width="13" height="9" viewBox="0 0 13 9"><path d="M1 7.5l5.5-5.5 5.5 5.5" fill="none" stroke="#fff" stroke-width="1.3"/></svg>
<svg style="left:1306.5px;top:1172px;" width="18" height="16" viewBox="0 0 18 16"><g fill="none" stroke="#fff" stroke-width="1.2"><rect x="4" y="2.5" width="12.5" height="8"/><path d="M10 10.5v3M6 14.200h9"/><rect x="1" y="1" width="4.5" height="5.5" fill="#201e1b"/></g></svg>
<svg style="left:1330.5px;top:1171px;" width="17" height="17" viewBox="0 0 17 17"><circle cx="8.5" cy="8.5" r="8" fill="#8cc63f"/><circle cx="8.5" cy="8.5" r="5.5" fill="none" stroke="#eaf5d8" stroke-width="1.5"/><path d="M8.5 3v11" stroke="#8cc63f" stroke-width="2"/></svg>
<svg style="left:1356px;top:1171px;" width="13" height="18" viewBox="0 0 13 18"><rect x="1" y="1" width="11" height="16" rx="4.5" fill="#e4e4e4" stroke="#aaa"/><path d="M6.5 1v7M1 8h11" stroke="#999" stroke-width="0.8"/><path d="M5 11.5l3 3M8 11.5l-3 3" stroke="#777" stroke-width="0.9"/></svg>
<svg style="left:1378px;top:1172px;" width="18" height="16" viewBox="0 0 18 16"><path d="M1 5.5h3l4-3.5v12l-4-3.5H1z" fill="none" stroke="#fff" stroke-width="1.2"/><path d="M10.5 5.5c1 1.5 1 3.5 0 5M12.8 3.5c2 2.5 2 6.5 0 9" fill="none" stroke="#fff" stroke-width="1.1"/><path d="M15 1.5c2.8 3.5 2.8 9.5 0 13" fill="none" stroke="#888" stroke-width="1"/></svg>
<svg style="left:1402px;top:1172px;" width="19" height="16" viewBox="0 0 19 16"><path d="M5 2L1 8l4 6" fill="none" stroke="#ddd" stroke-width="1.2"/><path d="M11 1.5l7 6.5-7 6.5-5.5-6.5z" fill="#e8202a"/></svg>
<svg style="left:1427px;top:1172px;" width="16" height="17" viewBox="0 0 16 17"><rect x="0.5" y="0.5" width="15" height="16" fill="#7ee08a" stroke="#444"/><path d="M1 13.5h3l1-1 2 1 2-1.5 2 1.5h4v3H1z" fill="#e02a2a"/></svg>
<span class="t" style="left:1453px;top:1171.87px;height:16px;line-height:16px;font-size:12.5px;color:#fff;transform:scaleX(0.8491);">ENG</span>
<span class="t" style="left:1493px;top:1163.27px;height:16px;line-height:16px;font-size:12.5px;color:#fff;transform:scaleX(0.9267);">2:36 AM</span>
<span class="t" style="left:1489.5px;top:1181.37px;height:16px;line-height:16px;font-size:12.5px;color:#fff;transform:scaleX(0.9262);">5/10/2018</span>
<svg style="left:1558px;top:1171px;" width="26" height="22" viewBox="0 0 26 22"><path d="M1.5 1.5h15v11h-9l-3 3v-3h-3z" fill="#fff"/><path d="M4 4.5h10M4 7h10M4 9.5h7" stroke="#201e1b" stroke-width="1"/><circle cx="17.5" cy="14" r="6.3" fill="#201e1b" stroke="#8a8a8a" stroke-width="1.2"/><text x="17.5" y="17.8" font-family="Liberation Sans" font-weight="bold" font-size="10" fill="#fff" text-anchor="middle">4</text></svg>
<div style="left:1594px;top:1162px;width:1px;height:38px;background:#6a6a6a;"></div>
</body></html>
